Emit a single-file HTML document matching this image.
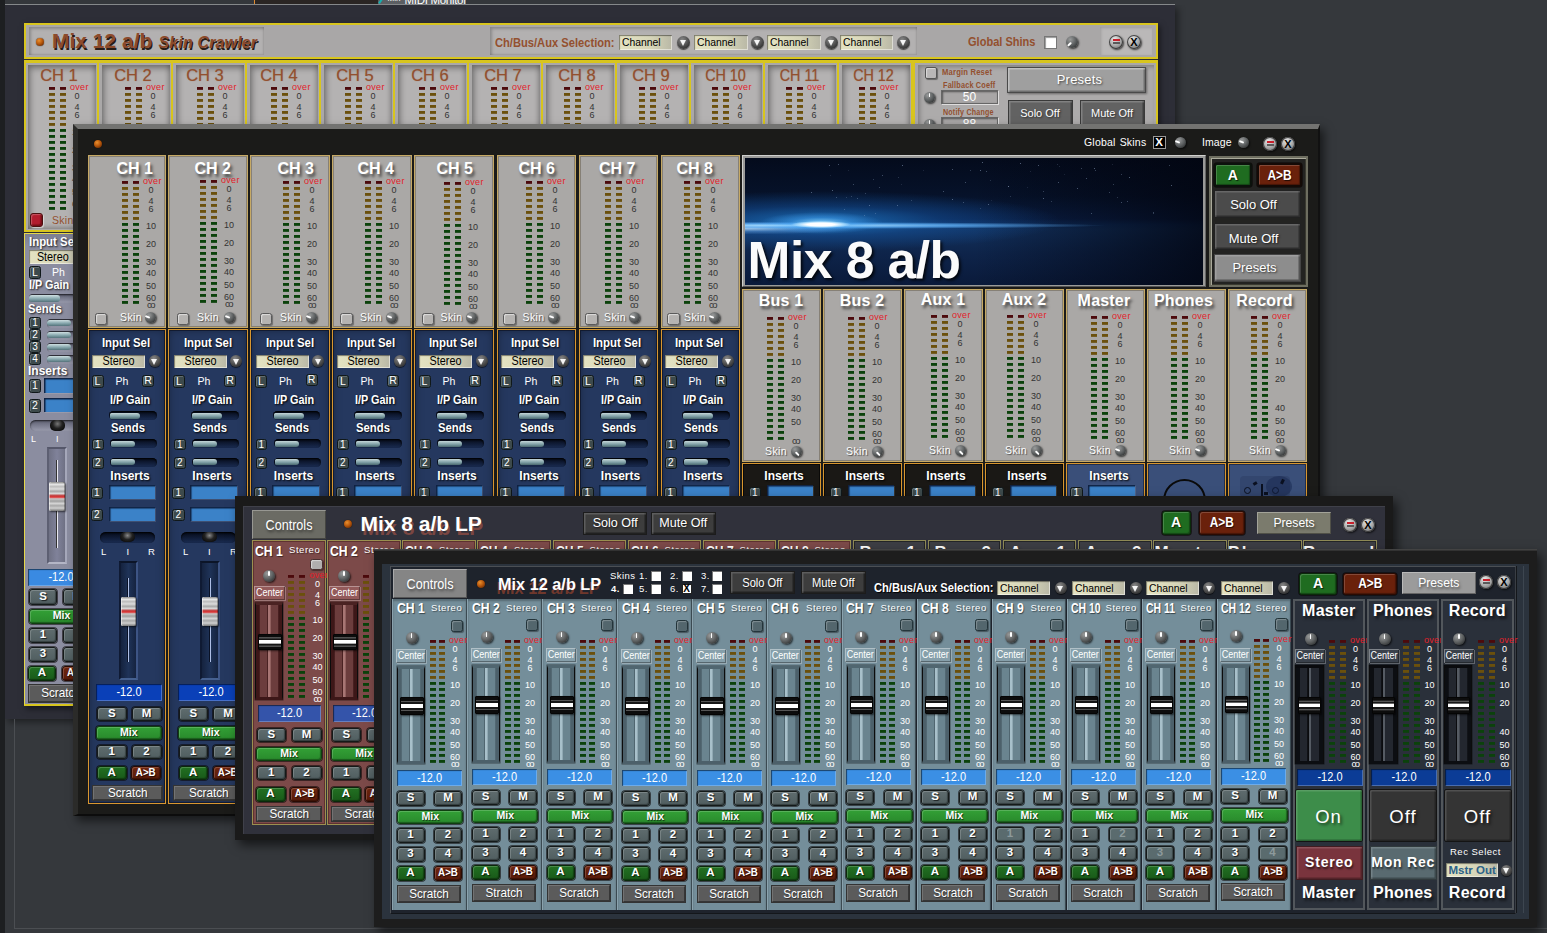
<!DOCTYPE html><html><head><meta charset="utf-8"><title>Mixer skins</title><style>
html,body{margin:0;padding:0;overflow:hidden}
body{width:1547px;height:933px;position:relative;overflow:hidden;background:#35383c;
 font-family:"Liberation Sans",sans-serif;font-size:12px;color:#fff}
div,span,i{position:absolute;display:block;box-sizing:border-box;white-space:nowrap}
b,i{font-style:inherit}
.sx{left:0;right:0;top:0;text-align:center;transform-origin:50% 50%}
.sxl{left:0;top:0;transform-origin:0 50%}
.dd .sxl{left:3px}
.dd.c .sx{left:0}
.win{overflow:hidden}
.c{text-align:center}
.bd{font-weight:bold}
.sh{text-shadow:1px 1px 2px rgba(0,0,0,.85)}
.mc{width:6px;height:124px;background:linear-gradient(to bottom,rgb(76,10,12) 0px,rgb(76,10,12) 2px,rgba(76,10,12,.85) 2px,rgba(76,10,12,.85) 3px,transparent 3px,transparent 6px,rgb(107,80,12) 6px,rgb(107,80,12) 8px,rgba(107,80,12,.85) 8px,rgba(107,80,12,.85) 9px,transparent 9px,transparent 12px,rgb(107,80,12) 12px,rgb(107,80,12) 14px,rgba(107,80,12,.85) 14px,rgba(107,80,12,.85) 15px,transparent 15px,transparent 18px,rgb(107,80,12) 18px,rgb(107,80,12) 20px,rgba(107,80,12,.85) 20px,rgba(107,80,12,.85) 21px,transparent 21px,transparent 24px,rgb(107,80,12) 24px,rgb(107,80,12) 26px,rgba(107,80,12,.85) 26px,rgba(107,80,12,.85) 27px,transparent 27px,transparent 30px,rgb(107,80,12) 30px,rgb(107,80,12) 32px,rgba(107,80,12,.85) 32px,rgba(107,80,12,.85) 33px,transparent 33px,transparent 36px,rgb(107,80,12) 36px,rgb(107,80,12) 38px,rgba(107,80,12,.85) 38px,rgba(107,80,12,.85) 39px,transparent 39px,transparent 42px,rgb(11,66,11) 42px,rgb(11,66,11) 44px,rgba(11,66,11,.85) 44px,rgba(11,66,11,.85) 45px,transparent 45px,transparent 48px,rgb(11,66,11) 48px,rgb(11,66,11) 50px,rgba(11,66,11,.85) 50px,rgba(11,66,11,.85) 51px,transparent 51px,transparent 54px,rgb(11,66,11) 54px,rgb(11,66,11) 56px,rgba(11,66,11,.85) 56px,rgba(11,66,11,.85) 57px,transparent 57px,transparent 60px,rgb(11,66,11) 60px,rgb(11,66,11) 62px,rgba(11,66,11,.85) 62px,rgba(11,66,11,.85) 63px,transparent 63px,transparent 66px,rgb(11,66,11) 66px,rgb(11,66,11) 68px,rgba(11,66,11,.85) 68px,rgba(11,66,11,.85) 69px,transparent 69px,transparent 72px,rgb(11,66,11) 72px,rgb(11,66,11) 74px,rgba(11,66,11,.85) 74px,rgba(11,66,11,.85) 75px,transparent 75px,transparent 78px,rgb(11,66,11) 78px,rgb(11,66,11) 80px,rgba(11,66,11,.85) 80px,rgba(11,66,11,.85) 81px,transparent 81px,transparent 84px,rgb(11,66,11) 84px,rgb(11,66,11) 86px,rgba(11,66,11,.85) 86px,rgba(11,66,11,.85) 87px,transparent 87px,transparent 90px,rgb(11,66,11) 90px,rgb(11,66,11) 92px,rgba(11,66,11,.85) 92px,rgba(11,66,11,.85) 93px,transparent 93px,transparent 96px,rgb(11,66,11) 96px,rgb(11,66,11) 98px,rgba(11,66,11,.85) 98px,rgba(11,66,11,.85) 99px,transparent 99px,transparent 102px,rgb(11,66,11) 102px,rgb(11,66,11) 104px,rgba(11,66,11,.85) 104px,rgba(11,66,11,.85) 105px,transparent 105px,transparent 108px,rgb(11,66,11) 108px,rgb(11,66,11) 110px,rgba(11,66,11,.85) 110px,rgba(11,66,11,.85) 111px,transparent 111px,transparent 114px,rgb(11,66,11) 114px,rgb(11,66,11) 116px,rgba(11,66,11,.85) 116px,rgba(11,66,11,.85) 117px,transparent 117px,transparent 120px,rgb(11,66,11) 120px,rgb(11,66,11) 122px,rgba(11,66,11,.85) 122px,rgba(11,66,11,.85) 123px,transparent 123px,transparent 126px)}
.ov{color:#e2202a;font-size:9px;letter-spacing:.3px}
.nm{font-size:9px;color:#333;width:14px;text-align:center;height:8px;line-height:8px}
.nw{color:#fff}
.inf{font-size:9.5px;letter-spacing:-1.6px;text-indent:-1px}
.led{border-radius:50%;background:radial-gradient(circle at 38% 32%,#e89030 0,#b8580c 45%,#4a1c02 100%);box-shadow:0 0 1px #000}
.kn{border-radius:50%;background:radial-gradient(circle at 35% 30%,#9a9c9c 0,#5c5f60 50%,#1c1e1e 100%);box-shadow:1px 1px 2px rgba(0,0,0,.7)}
.kn:after{content:"";position:absolute;left:50%;top:1px;width:1.5px;height:45%;margin-left:-.75px;background:#fff;border-radius:1px}
.kl:after{transform-origin:50% 100%;transform:rotate(-70deg)}
.kr:after{transform-origin:50% 100%;transform:rotate(135deg);}
.kq:after{transform-origin:50% 100%;transform:rotate(-135deg);}
.arr{border-radius:50%;background:radial-gradient(circle at 40% 30%,#8a8a8a 0,#4a4a4a 55%,#1a1a1a 100%);box-shadow:0 1px 1px rgba(0,0,0,.6)}
.arr:after{content:"";position:absolute;left:50%;top:50%;margin:-2.5px 0 0 -3.5px;border:3.5px solid transparent;border-top:6px solid #f4f4f4;border-bottom:0}
.dd{background:linear-gradient(to right,#e4e3c2 0,#d6d5b8 60%,#b9b8a6 100%);color:#000;font-size:11.5px;box-shadow:inset 1px 1px 1px rgba(0,0,0,.45),inset -1px -1px 0 rgba(255,255,255,.5)}
.rb{border-radius:50%;background:radial-gradient(circle at 40% 30%,#e8e8e8 0,#a8a8a8 50%,#555 100%);box-shadow:1px 1px 2px rgba(0,0,0,.7),inset 0 0 0 1px rgba(40,40,40,.8);color:#000;font-weight:bold;font-size:11px;text-align:center}
.rb i{left:3.5px;right:3.5px;height:2px;background:#c8202c}
/* generic small buttons */
.bt{background:linear-gradient(to bottom,#5f6c6e,#505e60);border:1.5px solid #141a19;border-radius:3px;box-shadow:inset 1px 1px 0 rgba(255,255,255,.18),inset -1px -1px 1px rgba(0,0,0,.35),0 0 0 .8px rgba(12,8,8,.75);font-weight:bold;text-align:center;font-size:11.5px;text-shadow:1px 1px 1px rgba(0,0,0,.7)}
.bt.dis{color:#8d9a9c;background:#5a6b6e;text-shadow:none}
.mix{background:linear-gradient(to bottom,#33a036,#298a2c);border-color:#0f3f10}
.ba{background:linear-gradient(to bottom,#227022,#195a19);border-color:#0a2a0a}
.bb{background:linear-gradient(to bottom,#70260f,#5a1c0a);border-color:#2a0a02}
.scr{background:#5b5b5b;border:1px solid #333;box-shadow:inset 1px 1px 0 rgba(255,255,255,.15),inset -1px -1px 0 rgba(0,0,0,.4);text-align:center;font-size:13px;text-shadow:1px 1px 1px rgba(0,0,0,.5)}
.val{text-align:center;font-size:12px;box-shadow:inset 1px 1px 1px rgba(0,0,0,.55),inset -1px -1px 0 rgba(255,255,255,.25)}
.nb{background:#3d4a4c;border:1.5px solid #10181a;border-radius:2.5px;font-size:10.5px;text-align:center;font-weight:normal;box-shadow:inset 1px 1px 0 rgba(255,255,255,.2)}
.sl{border-radius:5px;background:linear-gradient(to bottom,#050a18,#1a2c52);box-shadow:inset 0 1px 2px #000}
.sl i{left:1px;top:1.5px;bottom:1.5px;border-radius:2px 4px 4px 2px;background:linear-gradient(to bottom,#c4d6d8 0,#7fa0a6 55%,#4a686e 100%)}
.ins{background:#3b82c8;box-shadow:inset 1.5px 1.5px 1px rgba(0,0,20,.75),1px 1px 0 rgba(255,255,255,.12)}

.w1{background:#a9a7a7;border:2px solid #d8c51d}
.w1p{background:#b3b1b1;box-shadow:inset 2px 2px 3px rgba(0,0,0,.22),inset -1px -1px 2px rgba(0,0,0,.12)}
.w1ch{background:#aaa8a8;border:1.5px solid #d8c51d;border-top-width:3px;border-bottom-width:2px}
.w1w{background:#b4b2b2;box-shadow:inset 2px 3px 6px rgba(0,0,0,.38),inset -2px -2px 5px rgba(0,0,0,.2)}
.w1t{color:#8c4a2b;font-weight:bold;text-shadow:1px 1.5px .5px rgba(20,8,4,.9)}
.br{color:#93502f}
.w1lo{background:linear-gradient(to bottom,#7c7e91 0,#8b8da0 12px);border:1.5px solid #e6d84a;border-bottom:2px solid #d8c51d}
.cb{background:#b9b7b7;border:1.5px solid #555;border-radius:2px;box-shadow:inset 1px 1px 1px rgba(255,255,255,.5),1px 1px 1px rgba(0,0,0,.4)}
.tiny{font-size:8.5px;font-weight:bold;color:#93502f;letter-spacing:.2px}
.gbtn{background:#9f9f9f;border:1px solid #4a4a4a;box-shadow:inset 1.5px 1.5px 0 rgba(255,255,255,.35),inset -1.5px -1.5px 0 rgba(0,0,0,.3),1px 1px 2px rgba(0,0,0,.4);text-align:center;text-shadow:1px 1px 2px rgba(0,0,0,.6)}
.dbtn{background:#626262;border:1px solid #3a3a3a;box-shadow:inset 1.5px 1.5px 0 rgba(255,255,255,.2),inset -1.5px -1.5px 0 rgba(0,0,0,.35);text-align:center;text-shadow:1px 1px 2px rgba(0,0,0,.6)}
.w1v{background:#a8a6a6;border:1px solid #666;box-shadow:inset 1px 1px 2px rgba(0,0,0,.5),1px 1px 0 rgba(255,255,255,.6);text-align:center;font-size:12px;color:#fff}
.w1sl{border-radius:4px;background:linear-gradient(to bottom,#5c5e70,#9a9cae);box-shadow:inset 0 1px 2px rgba(0,0,0,.7)}
.w1sl i{left:0;top:1px;bottom:1.5px;border-radius:3px;background:linear-gradient(to bottom,#cfe0e2 0,#86a7ad 55%,#54727a 100%)}

.fcap{background:linear-gradient(to bottom,#888 0,#e6e6e6 8%,#bdbdbd 16%,#dcdcdc 24%,#a8a8a8 32%,#d8d8d8 40%,#c04040 47%,#e03030 52%,#c8c8c8 58%,#a0a0a0 66%,#d4d4d4 74%,#a8a8a8 82%,#cfcfcf 90%,#777 100%);border-radius:1.5px;box-shadow:1px 1px 2px rgba(0,0,0,.6),inset 1px 0 0 rgba(255,255,255,.5),inset -1px 0 0 rgba(0,0,0,.3)}

.w2{background:#1b1b19;border-top:5px solid #737371;border-left:5px solid #2b2b29;border-right:2px solid #111;border-bottom:2px solid #0c0c0c;box-shadow:4px 5px 9px rgba(0,0,0,.55)}
.w2ch{background:#aaa8a6;border:1.5px solid #c6a964;box-shadow:inset 0 0 0 1px rgba(90,80,60,.45)}
.w2lo{background:#25385f;border:1.5px solid #d8962f;box-shadow:inset 0 0 0 1px rgba(10,15,30,.6),inset 0 0 8px rgba(0,0,0,.35)}
.w2lb{background:#1a1815;border:1.5px solid #d8962f;box-shadow:inset 0 0 0 1px rgba(0,0,0,.6)}
.w2lm{background:#3a4f79;border:1.5px solid #d8962f;box-shadow:inset 0 0 0 1px rgba(10,15,30,.5)}
.lbl{font-weight:bold;font-size:16px;text-align:center;text-shadow:2px 3px 3px rgba(0,0,0,.6)}
.wl{font-weight:bold;font-size:12px;text-align:center;text-shadow:1px 1px 2px #000}
.cbw{background:#b5b3b1;border:1.5px solid #5a5a5a;border-radius:2.5px;box-shadow:inset 1px 1px 1px rgba(255,255,255,.55),1px 1px 1px rgba(0,0,0,.35)}
.skw{font-size:10.5px;letter-spacing:.4px;text-shadow:1px 1px 1px rgba(0,0,0,.55)}
.w2btn{background:#4b4b4b;border:1px solid #222;box-shadow:inset 1.5px 1.5px 0 rgba(255,255,255,.16),inset -1.5px -1.5px 0 rgba(0,0,0,.4);text-align:center;font-size:13px;text-shadow:1px 1px 2px rgba(0,0,0,.7)}
.gal{overflow:hidden;background:
 radial-gradient(ellipse 30px 3.5px at 76px 66.5px,#fff 0,#fff 45%,rgba(190,230,255,.8) 72%,rgba(80,170,245,0) 100%),
 radial-gradient(ellipse 62px 11px at 76px 65px,rgba(140,215,255,.9) 0,rgba(70,165,245,.45) 50%,rgba(40,120,220,0) 100%),
 radial-gradient(ellipse 300px 3.5px at 60px 67.5px,rgba(175,225,255,1) 0,rgba(95,175,245,.8) 50%,rgba(30,80,170,0) 100%),
 radial-gradient(ellipse 115px 6.5px at 0 70px,rgba(195,228,255,.85) 0,rgba(110,170,235,.4) 55%,rgba(30,80,170,0) 100%),
 radial-gradient(ellipse 240px 30px at 76px 63px,rgba(30,125,205,.8) 0,rgba(20,90,170,.42) 50%,rgba(10,40,100,0) 100%),
 linear-gradient(to right,rgba(2,5,16,0) 50%,rgba(2,5,16,.8) 100%),
 linear-gradient(to bottom,#040b1c 0,#06122a 30%,#0a1e44 48%,#0e2c5a 52.5%,#12305c 56%,#0e244a 75%,#0a1a3a 100%)}
.star{width:1px;height:1px;background:#9fb6d6}

.w3{background:#30313b;border:8.5px solid #1a1a1a;border-top-width:10px;border-bottom-width:6.5px;box-shadow:4px 5px 10px rgba(0,0,0,.6),inset 1px 1px 0 #3f4049}
.w3s{background:#7c4a49;border:1px solid #9a9050;box-shadow:inset 0 0 0 1px rgba(60,20,20,.45)}
.w3b{background:#3d3e44;border:1px solid #8f8a56;box-shadow:inset 0 0 0 1px rgba(0,0,0,.4)}
.tab{text-align:center;font-size:14px;text-shadow:1px 2px 3px rgba(0,0,0,.55);box-shadow:inset 1px 1px 0 rgba(255,255,255,.3),inset -1px -1px 0 rgba(0,0,0,.35)}
.cn{font-weight:bold;font-size:14.5px;transform-origin:0 50%;transform:scaleX(.84);text-shadow:1px 1px 1px rgba(0,0,0,.5)}
.st{font-size:9.5px;letter-spacing:.55px;text-shadow:1px 1px 1px rgba(0,0,0,.45)}
.sb{background:#b0aeae;border:1.5px solid #4a3030;border-radius:2.5px;box-shadow:inset 1px 1px 1px rgba(255,255,255,.5),1px 1px 1px rgba(0,0,0,.4)}
.ctr{font-size:10px;text-align:center;box-shadow:inset 1px 1px 0 rgba(255,255,255,.35),inset -1px -1px 0 rgba(0,0,0,.35),1px 1px 0 rgba(255,255,255,.25)}
.fcb{background:linear-gradient(to bottom,#0c0c0c 0,#0c0c0c 16%,#555 18%,#555 24%,#161616 26%,#161616 36%,#fff 38%,#fff 60%,#161616 62%,#161616 74%,#555 76%,#555 82%,#0c0c0c 84%,#0c0c0c 100%);border:1px solid #050505;border-radius:1px;box-shadow:1px 1px 2px rgba(0,0,0,.6)}
.hbtn{background:#3d3d3d;border:1px solid #1c1c1c;box-shadow:inset 1.5px 1.5px 0 rgba(255,255,255,.17),inset -1.5px -1.5px 0 rgba(0,0,0,.45);text-align:center;font-size:13.5px;text-shadow:1px 1px 2px rgba(0,0,0,.7)}

.w4{background:#2b333d;border:8px solid #1d1d1d;border-top-width:15.5px;box-shadow:4px 5px 10px rgba(0,0,0,.6)}
.w4i{background:#1e232c;border:1.5px solid #4b4f54;border-right-color:#3a3e44;border-bottom-color:#14171b}
.w4s{background:#748e9a;border-right:1.5px solid #3b4a52;border-left:1px solid #8aa2ad;box-shadow:inset 0 2px 2px rgba(0,0,0,.25)}
.w4m{background:#2a303a;border:2px solid #52575c}
.sb4{background:#53666d;border:1.5px solid #23343a;border-radius:2.5px;box-shadow:inset 1px 1px 1px rgba(255,255,255,.25),1px 1px 1px rgba(0,0,0,.4)}
.sk4{font-size:9.5px;letter-spacing:.45px}
.ck{background:#fff;box-shadow:inset 1px 1px 0 #777}
.big{border:1.5px solid #141414;border-radius:2px;text-align:center;font-size:18.5px;letter-spacing:1px;text-shadow:2px 2px 3px rgba(0,0,0,.6);box-shadow:inset 1.5px 1.5px 0 rgba(255,255,255,.14),inset -1.5px -1.5px 0 rgba(0,0,0,.3)}
.mid{border:1.5px solid rgba(0,0,0,.45);text-align:center;font-weight:bold;font-size:14px;letter-spacing:.8px;text-shadow:1px 2px 2px rgba(0,0,0,.6);box-shadow:inset 1.5px 1.5px 0 rgba(255,255,255,.16),inset -1.5px -1.5px 0 rgba(0,0,0,.3)}
</style></head><body><div class="" style="left:5px;top:5px;width:1170px;height:713.5px;line-height:713.5px;background:#2d2e37;box-shadow:3px 3px 7px rgba(0,0,0,.45)"></div><div class="" style="left:0px;top:0px;width:1547px;height:4.5px;line-height:4.5px;background:#34373b;border-bottom:1px solid #85888a"></div><div class="" style="left:254px;top:0px;width:124px;height:4px;line-height:4px;background:#2a2523;border-left:1.5px solid #e08a30"></div><div class="" style="left:378px;top:0px;width:88px;height:4px;line-height:4px;background:#5c5f63;overflow:hidden"><span style="left:9.5px;top:-6px;font-size:8px;line-height:10px">Min</span><i style="left:2px;top:-3px;width:2px;height:7px;background:#16b0b0;transform:rotate(35deg)"></i><span style="left:26.5px;top:-6px;font-size:11.5px;line-height:12px;letter-spacing:-.3px">MIDI Monitor</span></div><div class="" style="left:1175px;top:0px;width:372px;height:5px;line-height:5px;background:#35383c"></div><div class="" style="left:0px;top:0px;width:5px;height:933px;line-height:933px;background:#1d1f21"></div><div class="" style="left:14px;top:718.5px;width:1px;height:210px;line-height:210px;background:#4b4e52"></div><div class="" style="left:14px;top:928px;width:1533px;height:1px;line-height:1px;background:#4b4e52"></div><div class="" style="left:24px;top:23px;width:1133.5px;height:683px;line-height:683px;background:#2d2e37;box-shadow:2px 3px 6px rgba(0,0,0,.5)"></div><div class="w1" style="left:24px;top:23px;width:1133.5px;height:36px;line-height:36px;"></div><div class="w1p" style="left:29px;top:27px;width:235px;height:28px;line-height:28px;"></div><div class="led" style="left:36px;top:38px;width:8px;height:8px;line-height:8px;"></div><div class="w1t" style="left:52px;top:27px;height:28px;line-height:28px;font-size:21px">Mix 12 a/b</div><div class="w1t" style="left:158.5px;top:29px;height:28px;line-height:28px;font-size:16px;font-style:italic;letter-spacing:.15px">Skin Crawler</div><div class="w1p" style="left:489.5px;top:27px;width:427px;height:28px;line-height:28px;"></div><div class="bd br" style="left:495px;top:35.5px;height:15px;line-height:15px;font-size:12.5px"><span class="sxl" style="transform:scaleX(0.892)">Ch/Bus/Aux Selection:</span></div><div class="dd" style="left:618.5px;top:34.5px;width:53.5px;height:15px;line-height:15px;"><span class="sxl" style="transform:scaleX(0.9)">Channel</span></div><div class="arr" style="left:676.5px;top:35.5px;width:13px;height:13px;line-height:13px;"></div><div class="dd" style="left:694px;top:34.5px;width:53.5px;height:15px;line-height:15px;"><span class="sxl" style="transform:scaleX(0.9)">Channel</span></div><div class="arr" style="left:751px;top:35.5px;width:13px;height:13px;line-height:13px;"></div><div class="dd" style="left:767px;top:34.5px;width:53.5px;height:15px;line-height:15px;"><span class="sxl" style="transform:scaleX(0.9)">Channel</span></div><div class="arr" style="left:824.5px;top:35.5px;width:13px;height:13px;line-height:13px;"></div><div class="dd" style="left:839.5px;top:34.5px;width:53.5px;height:15px;line-height:15px;"><span class="sxl" style="transform:scaleX(0.9)">Channel</span></div><div class="arr" style="left:897px;top:35.5px;width:13px;height:13px;line-height:13px;"></div><div class="bd br" style="left:968px;top:34.5px;height:15px;line-height:15px;font-size:12.5px"><span class="sxl" style="transform:scaleX(0.883)">Global Shins</span></div><div class="" style="left:1044px;top:35.5px;width:13px;height:13px;line-height:13px;background:#fff;border:1px solid #777;box-shadow:inset 1px 1px 1px rgba(0,0,0,.4)"></div><div class="kn kq" style="left:1066px;top:35.5px;width:12px;height:12px;line-height:12px;"></div><div class="w1p" style="left:1099.5px;top:27px;width:52px;height:28px;line-height:28px;background:#bab8b8;box-shadow:inset 1px 1px 3px rgba(0,0,0,.15)"></div><div class="rb" style="left:1109px;top:34.5px;width:14px;height:14px;line-height:14px;"><i style="top:4px"></i><i style="top:7px;background:#5a5a5a"></i></div><div class="rb" style="left:1127px;top:34.5px;width:14px;height:14px;line-height:14px;">X</div><div class="w1ch" style="left:24px;top:60px;width:74px;height:172px;line-height:172px;border-left-width:2px"></div><div class="w1w" style="left:28px;top:65px;width:67.5px;height:164px;line-height:164px;"></div><div class="c br" style="left:27.5px;top:66px;width:63px;height:18px;line-height:18px;font-size:16.5px;text-shadow:0 0 1px rgba(147,80,47,.6)">CH 1</div><div class="mc" style="left:49px;top:87px;"></div><div class="mc" style="left:60px;top:87px;"></div><div class="ov" style="left:70px;top:82px;height:10px;line-height:10px;">over</div><div class="nm" style="left:70px;top:92px;">0</div><div class="nm" style="left:70px;top:102.5px;">4</div><div class="nm" style="left:70px;top:110.5px;">6</div><div class="nm" style="left:70px;top:128px;">10</div><div class="nm" style="left:70px;top:145.5px;">20</div><div class="nm" style="left:70px;top:163.5px;">30</div><div class="nm" style="left:70px;top:175px;">40</div><div class="nm" style="left:70px;top:187.5px;">50</div><div class="nm" style="left:70px;top:199.5px;">60</div><div class="nm inf" style="left:70px;top:206.5px;">co</div><div class="" style="left:30px;top:213px;width:13px;height:14px;line-height:14px;background:#b21c2e;border:1.5px solid #4a1010;border-radius:3px;box-shadow:inset 1px 1px 1px rgba(255,255,255,.25),inset -1.5px -1.5px 1px rgba(60,0,0,.5),1px 1px 1px rgba(255,255,255,.5)"></div><div class="br" style="left:52px;top:213px;height:14px;line-height:14px;font-size:10.5px;letter-spacing:.3px">Skin</div><div class="w1ch" style="left:98px;top:60px;width:74px;height:172px;line-height:172px;"></div><div class="w1w" style="left:102px;top:65px;width:67.5px;height:164px;line-height:164px;"></div><div class="c br" style="left:101.5px;top:66px;width:63px;height:18px;line-height:18px;font-size:16.5px;text-shadow:0 0 1px rgba(147,80,47,.6)">CH 2</div><div class="mc" style="left:125px;top:87px;"></div><div class="mc" style="left:136px;top:87px;"></div><div class="ov" style="left:146px;top:82px;height:10px;line-height:10px;">over</div><div class="nm" style="left:146px;top:92px;">0</div><div class="nm" style="left:146px;top:102.5px;">4</div><div class="nm" style="left:146px;top:110.5px;">6</div><div class="nm" style="left:146px;top:128px;">10</div><div class="nm" style="left:146px;top:145.5px;">20</div><div class="nm" style="left:146px;top:163.5px;">30</div><div class="nm" style="left:146px;top:175px;">40</div><div class="nm" style="left:146px;top:187.5px;">50</div><div class="nm" style="left:146px;top:199.5px;">60</div><div class="nm inf" style="left:146px;top:206.5px;">co</div><div class="" style="left:104px;top:213px;width:13px;height:14px;line-height:14px;background:#b9b7b7;border:1.5px solid #4a1010;border-radius:3px;box-shadow:inset 1px 1px 1px rgba(255,255,255,.25),inset -1.5px -1.5px 1px rgba(60,0,0,.5),1px 1px 1px rgba(255,255,255,.5)"></div><div class="br" style="left:126px;top:213px;height:14px;line-height:14px;font-size:10.5px;letter-spacing:.3px">Skin</div><div class="w1ch" style="left:172px;top:60px;width:74px;height:172px;line-height:172px;"></div><div class="w1w" style="left:176px;top:65px;width:67.5px;height:164px;line-height:164px;"></div><div class="c br" style="left:173.5px;top:66px;width:63px;height:18px;line-height:18px;font-size:16.5px;text-shadow:0 0 1px rgba(147,80,47,.6)">CH 3</div><div class="mc" style="left:197px;top:87px;"></div><div class="mc" style="left:208px;top:87px;"></div><div class="ov" style="left:218px;top:82px;height:10px;line-height:10px;">over</div><div class="nm" style="left:218px;top:92px;">0</div><div class="nm" style="left:218px;top:102.5px;">4</div><div class="nm" style="left:218px;top:110.5px;">6</div><div class="nm" style="left:218px;top:128px;">10</div><div class="nm" style="left:218px;top:145.5px;">20</div><div class="nm" style="left:218px;top:163.5px;">30</div><div class="nm" style="left:218px;top:175px;">40</div><div class="nm" style="left:218px;top:187.5px;">50</div><div class="nm" style="left:218px;top:199.5px;">60</div><div class="nm inf" style="left:218px;top:206.5px;">co</div><div class="" style="left:178px;top:213px;width:13px;height:14px;line-height:14px;background:#b9b7b7;border:1.5px solid #4a1010;border-radius:3px;box-shadow:inset 1px 1px 1px rgba(255,255,255,.25),inset -1.5px -1.5px 1px rgba(60,0,0,.5),1px 1px 1px rgba(255,255,255,.5)"></div><div class="br" style="left:200px;top:213px;height:14px;line-height:14px;font-size:10.5px;letter-spacing:.3px">Skin</div><div class="w1ch" style="left:246px;top:60px;width:74px;height:172px;line-height:172px;"></div><div class="w1w" style="left:250px;top:65px;width:67.5px;height:164px;line-height:164px;"></div><div class="c br" style="left:247.5px;top:66px;width:63px;height:18px;line-height:18px;font-size:16.5px;text-shadow:0 0 1px rgba(147,80,47,.6)">CH 4</div><div class="mc" style="left:271px;top:87px;"></div><div class="mc" style="left:282px;top:87px;"></div><div class="ov" style="left:292px;top:82px;height:10px;line-height:10px;">over</div><div class="nm" style="left:292px;top:92px;">0</div><div class="nm" style="left:292px;top:102.5px;">4</div><div class="nm" style="left:292px;top:110.5px;">6</div><div class="nm" style="left:292px;top:128px;">10</div><div class="nm" style="left:292px;top:145.5px;">20</div><div class="nm" style="left:292px;top:163.5px;">30</div><div class="nm" style="left:292px;top:175px;">40</div><div class="nm" style="left:292px;top:187.5px;">50</div><div class="nm" style="left:292px;top:199.5px;">60</div><div class="nm inf" style="left:292px;top:206.5px;">co</div><div class="" style="left:252px;top:213px;width:13px;height:14px;line-height:14px;background:#b9b7b7;border:1.5px solid #4a1010;border-radius:3px;box-shadow:inset 1px 1px 1px rgba(255,255,255,.25),inset -1.5px -1.5px 1px rgba(60,0,0,.5),1px 1px 1px rgba(255,255,255,.5)"></div><div class="br" style="left:274px;top:213px;height:14px;line-height:14px;font-size:10.5px;letter-spacing:.3px">Skin</div><div class="w1ch" style="left:320px;top:60px;width:74px;height:172px;line-height:172px;"></div><div class="w1w" style="left:324px;top:65px;width:67.5px;height:164px;line-height:164px;"></div><div class="c br" style="left:323.5px;top:66px;width:63px;height:18px;line-height:18px;font-size:16.5px;text-shadow:0 0 1px rgba(147,80,47,.6)">CH 5</div><div class="mc" style="left:345px;top:87px;"></div><div class="mc" style="left:356px;top:87px;"></div><div class="ov" style="left:366px;top:82px;height:10px;line-height:10px;">over</div><div class="nm" style="left:366px;top:92px;">0</div><div class="nm" style="left:366px;top:102.5px;">4</div><div class="nm" style="left:366px;top:110.5px;">6</div><div class="nm" style="left:366px;top:128px;">10</div><div class="nm" style="left:366px;top:145.5px;">20</div><div class="nm" style="left:366px;top:163.5px;">30</div><div class="nm" style="left:366px;top:175px;">40</div><div class="nm" style="left:366px;top:187.5px;">50</div><div class="nm" style="left:366px;top:199.5px;">60</div><div class="nm inf" style="left:366px;top:206.5px;">co</div><div class="" style="left:326px;top:213px;width:13px;height:14px;line-height:14px;background:#b9b7b7;border:1.5px solid #4a1010;border-radius:3px;box-shadow:inset 1px 1px 1px rgba(255,255,255,.25),inset -1.5px -1.5px 1px rgba(60,0,0,.5),1px 1px 1px rgba(255,255,255,.5)"></div><div class="br" style="left:348px;top:213px;height:14px;line-height:14px;font-size:10.5px;letter-spacing:.3px">Skin</div><div class="w1ch" style="left:394px;top:60px;width:74px;height:172px;line-height:172px;"></div><div class="w1w" style="left:398px;top:65px;width:67.5px;height:164px;line-height:164px;"></div><div class="c br" style="left:398.5px;top:66px;width:63px;height:18px;line-height:18px;font-size:16.5px;text-shadow:0 0 1px rgba(147,80,47,.6)">CH 6</div><div class="mc" style="left:419px;top:87px;"></div><div class="mc" style="left:430px;top:87px;"></div><div class="ov" style="left:440px;top:82px;height:10px;line-height:10px;">over</div><div class="nm" style="left:440px;top:92px;">0</div><div class="nm" style="left:440px;top:102.5px;">4</div><div class="nm" style="left:440px;top:110.5px;">6</div><div class="nm" style="left:440px;top:128px;">10</div><div class="nm" style="left:440px;top:145.5px;">20</div><div class="nm" style="left:440px;top:163.5px;">30</div><div class="nm" style="left:440px;top:175px;">40</div><div class="nm" style="left:440px;top:187.5px;">50</div><div class="nm" style="left:440px;top:199.5px;">60</div><div class="nm inf" style="left:440px;top:206.5px;">co</div><div class="" style="left:400px;top:213px;width:13px;height:14px;line-height:14px;background:#b9b7b7;border:1.5px solid #4a1010;border-radius:3px;box-shadow:inset 1px 1px 1px rgba(255,255,255,.25),inset -1.5px -1.5px 1px rgba(60,0,0,.5),1px 1px 1px rgba(255,255,255,.5)"></div><div class="br" style="left:422px;top:213px;height:14px;line-height:14px;font-size:10.5px;letter-spacing:.3px">Skin</div><div class="w1ch" style="left:468px;top:60px;width:74px;height:172px;line-height:172px;"></div><div class="w1w" style="left:472px;top:65px;width:67.5px;height:164px;line-height:164px;"></div><div class="c br" style="left:471.5px;top:66px;width:63px;height:18px;line-height:18px;font-size:16.5px;text-shadow:0 0 1px rgba(147,80,47,.6)">CH 7</div><div class="mc" style="left:491px;top:87px;"></div><div class="mc" style="left:502px;top:87px;"></div><div class="ov" style="left:512px;top:82px;height:10px;line-height:10px;">over</div><div class="nm" style="left:512px;top:92px;">0</div><div class="nm" style="left:512px;top:102.5px;">4</div><div class="nm" style="left:512px;top:110.5px;">6</div><div class="nm" style="left:512px;top:128px;">10</div><div class="nm" style="left:512px;top:145.5px;">20</div><div class="nm" style="left:512px;top:163.5px;">30</div><div class="nm" style="left:512px;top:175px;">40</div><div class="nm" style="left:512px;top:187.5px;">50</div><div class="nm" style="left:512px;top:199.5px;">60</div><div class="nm inf" style="left:512px;top:206.5px;">co</div><div class="" style="left:474px;top:213px;width:13px;height:14px;line-height:14px;background:#b9b7b7;border:1.5px solid #4a1010;border-radius:3px;box-shadow:inset 1px 1px 1px rgba(255,255,255,.25),inset -1.5px -1.5px 1px rgba(60,0,0,.5),1px 1px 1px rgba(255,255,255,.5)"></div><div class="br" style="left:496px;top:213px;height:14px;line-height:14px;font-size:10.5px;letter-spacing:.3px">Skin</div><div class="w1ch" style="left:542px;top:60px;width:74px;height:172px;line-height:172px;"></div><div class="w1w" style="left:546px;top:65px;width:67.5px;height:164px;line-height:164px;"></div><div class="c br" style="left:545.5px;top:66px;width:63px;height:18px;line-height:18px;font-size:16.5px;text-shadow:0 0 1px rgba(147,80,47,.6)">CH 8</div><div class="mc" style="left:564px;top:87px;"></div><div class="mc" style="left:575px;top:87px;"></div><div class="ov" style="left:585px;top:82px;height:10px;line-height:10px;">over</div><div class="nm" style="left:585px;top:92px;">0</div><div class="nm" style="left:585px;top:102.5px;">4</div><div class="nm" style="left:585px;top:110.5px;">6</div><div class="nm" style="left:585px;top:128px;">10</div><div class="nm" style="left:585px;top:145.5px;">20</div><div class="nm" style="left:585px;top:163.5px;">30</div><div class="nm" style="left:585px;top:175px;">40</div><div class="nm" style="left:585px;top:187.5px;">50</div><div class="nm" style="left:585px;top:199.5px;">60</div><div class="nm inf" style="left:585px;top:206.5px;">co</div><div class="" style="left:548px;top:213px;width:13px;height:14px;line-height:14px;background:#b9b7b7;border:1.5px solid #4a1010;border-radius:3px;box-shadow:inset 1px 1px 1px rgba(255,255,255,.25),inset -1.5px -1.5px 1px rgba(60,0,0,.5),1px 1px 1px rgba(255,255,255,.5)"></div><div class="br" style="left:570px;top:213px;height:14px;line-height:14px;font-size:10.5px;letter-spacing:.3px">Skin</div><div class="w1ch" style="left:616px;top:60px;width:74px;height:172px;line-height:172px;"></div><div class="w1w" style="left:620px;top:65px;width:67.5px;height:164px;line-height:164px;"></div><div class="c br" style="left:619.5px;top:66px;width:63px;height:18px;line-height:18px;font-size:16.5px;text-shadow:0 0 1px rgba(147,80,47,.6)">CH 9</div><div class="mc" style="left:639px;top:87px;"></div><div class="mc" style="left:650px;top:87px;"></div><div class="ov" style="left:660px;top:82px;height:10px;line-height:10px;">over</div><div class="nm" style="left:660px;top:92px;">0</div><div class="nm" style="left:660px;top:102.5px;">4</div><div class="nm" style="left:660px;top:110.5px;">6</div><div class="nm" style="left:660px;top:128px;">10</div><div class="nm" style="left:660px;top:145.5px;">20</div><div class="nm" style="left:660px;top:163.5px;">30</div><div class="nm" style="left:660px;top:175px;">40</div><div class="nm" style="left:660px;top:187.5px;">50</div><div class="nm" style="left:660px;top:199.5px;">60</div><div class="nm inf" style="left:660px;top:206.5px;">co</div><div class="" style="left:622px;top:213px;width:13px;height:14px;line-height:14px;background:#b9b7b7;border:1.5px solid #4a1010;border-radius:3px;box-shadow:inset 1px 1px 1px rgba(255,255,255,.25),inset -1.5px -1.5px 1px rgba(60,0,0,.5),1px 1px 1px rgba(255,255,255,.5)"></div><div class="br" style="left:644px;top:213px;height:14px;line-height:14px;font-size:10.5px;letter-spacing:.3px">Skin</div><div class="w1ch" style="left:690px;top:60px;width:74px;height:172px;line-height:172px;"></div><div class="w1w" style="left:694px;top:65px;width:67.5px;height:164px;line-height:164px;"></div><div class="c br" style="left:693.5px;top:66px;width:63px;height:18px;line-height:18px;font-size:16.5px;text-shadow:0 0 1px rgba(147,80,47,.6)"><span class="sx" style="transform:scaleX(0.87)">CH 10</span></div><div class="mc" style="left:712px;top:87px;"></div><div class="mc" style="left:723px;top:87px;"></div><div class="ov" style="left:733px;top:82px;height:10px;line-height:10px;">over</div><div class="nm" style="left:733px;top:92px;">0</div><div class="nm" style="left:733px;top:102.5px;">4</div><div class="nm" style="left:733px;top:110.5px;">6</div><div class="nm" style="left:733px;top:128px;">10</div><div class="nm" style="left:733px;top:145.5px;">20</div><div class="nm" style="left:733px;top:163.5px;">30</div><div class="nm" style="left:733px;top:175px;">40</div><div class="nm" style="left:733px;top:187.5px;">50</div><div class="nm" style="left:733px;top:199.5px;">60</div><div class="nm inf" style="left:733px;top:206.5px;">co</div><div class="" style="left:696px;top:213px;width:13px;height:14px;line-height:14px;background:#b9b7b7;border:1.5px solid #4a1010;border-radius:3px;box-shadow:inset 1px 1px 1px rgba(255,255,255,.25),inset -1.5px -1.5px 1px rgba(60,0,0,.5),1px 1px 1px rgba(255,255,255,.5)"></div><div class="br" style="left:718px;top:213px;height:14px;line-height:14px;font-size:10.5px;letter-spacing:.3px">Skin</div><div class="w1ch" style="left:764px;top:60px;width:74px;height:172px;line-height:172px;"></div><div class="w1w" style="left:768px;top:65px;width:67.5px;height:164px;line-height:164px;"></div><div class="c br" style="left:767.5px;top:66px;width:63px;height:18px;line-height:18px;font-size:16.5px;text-shadow:0 0 1px rgba(147,80,47,.6)"><span class="sx" style="transform:scaleX(0.87)">CH 11</span></div><div class="mc" style="left:786px;top:87px;"></div><div class="mc" style="left:797px;top:87px;"></div><div class="ov" style="left:807px;top:82px;height:10px;line-height:10px;">over</div><div class="nm" style="left:807px;top:92px;">0</div><div class="nm" style="left:807px;top:102.5px;">4</div><div class="nm" style="left:807px;top:110.5px;">6</div><div class="nm" style="left:807px;top:128px;">10</div><div class="nm" style="left:807px;top:145.5px;">20</div><div class="nm" style="left:807px;top:163.5px;">30</div><div class="nm" style="left:807px;top:175px;">40</div><div class="nm" style="left:807px;top:187.5px;">50</div><div class="nm" style="left:807px;top:199.5px;">60</div><div class="nm inf" style="left:807px;top:206.5px;">co</div><div class="" style="left:770px;top:213px;width:13px;height:14px;line-height:14px;background:#b9b7b7;border:1.5px solid #4a1010;border-radius:3px;box-shadow:inset 1px 1px 1px rgba(255,255,255,.25),inset -1.5px -1.5px 1px rgba(60,0,0,.5),1px 1px 1px rgba(255,255,255,.5)"></div><div class="br" style="left:792px;top:213px;height:14px;line-height:14px;font-size:10.5px;letter-spacing:.3px">Skin</div><div class="w1ch" style="left:838px;top:60px;width:74px;height:172px;line-height:172px;"></div><div class="w1w" style="left:842px;top:65px;width:67.5px;height:164px;line-height:164px;"></div><div class="c br" style="left:841.5px;top:66px;width:63px;height:18px;line-height:18px;font-size:16.5px;text-shadow:0 0 1px rgba(147,80,47,.6)"><span class="sx" style="transform:scaleX(0.87)">CH 12</span></div><div class="mc" style="left:859px;top:87px;"></div><div class="mc" style="left:870px;top:87px;"></div><div class="ov" style="left:880px;top:82px;height:10px;line-height:10px;">over</div><div class="nm" style="left:880px;top:92px;">0</div><div class="nm" style="left:880px;top:102.5px;">4</div><div class="nm" style="left:880px;top:110.5px;">6</div><div class="nm" style="left:880px;top:128px;">10</div><div class="nm" style="left:880px;top:145.5px;">20</div><div class="nm" style="left:880px;top:163.5px;">30</div><div class="nm" style="left:880px;top:175px;">40</div><div class="nm" style="left:880px;top:187.5px;">50</div><div class="nm" style="left:880px;top:199.5px;">60</div><div class="nm inf" style="left:880px;top:206.5px;">co</div><div class="" style="left:844px;top:213px;width:13px;height:14px;line-height:14px;background:#b9b7b7;border:1.5px solid #4a1010;border-radius:3px;box-shadow:inset 1px 1px 1px rgba(255,255,255,.25),inset -1.5px -1.5px 1px rgba(60,0,0,.5),1px 1px 1px rgba(255,255,255,.5)"></div><div class="br" style="left:866px;top:213px;height:14px;line-height:14px;font-size:10.5px;letter-spacing:.3px">Skin</div><div class="w1ch" style="left:912px;top:60px;width:245.5px;height:172px;line-height:172px;border-right-width:2px;border-left-width:3px"></div><div class="w1w" style="left:917.5px;top:64.5px;width:236px;height:164px;line-height:164px;background:#adabab;box-shadow:inset 2px 2px 4px rgba(0,0,0,.25)"></div><div class="cb" style="left:925px;top:66.5px;width:12px;height:12.5px;line-height:9.5px;"></div><div class="tiny" style="left:942px;top:67px;height:10px;line-height:10px;"><span class="sxl" style="transform:scaleX(0.9)">Margin Reset</span></div><div class="tiny" style="left:943px;top:80px;height:10px;line-height:10px;"><span class="sxl" style="transform:scaleX(0.86)">Fallback Coeff</span></div><div class="kn " style="left:924px;top:91.5px;width:11px;height:11px;line-height:11px;"></div><div class="w1v" style="left:941px;top:90px;width:57px;height:13.5px;line-height:13.5px;">50</div><div class="tiny" style="left:943px;top:106.5px;height:10px;line-height:10px;"><span class="sxl" style="transform:scaleX(0.84)">Notify Change</span></div><div class="kn " style="left:924px;top:118.5px;width:11px;height:11px;line-height:11px;"></div><div class="w1v" style="left:941px;top:117px;width:57px;height:13.5px;line-height:13.5px;">88</div><div class="gbtn" style="left:1007px;top:66.5px;width:139px;height:26px;line-height:23px;font-size:13px;letter-spacing:.2px;text-indent:6px">Presets</div><div class="dbtn" style="left:1007.5px;top:100px;width:65px;height:27.5px;line-height:24.5px;font-size:11px">Solo Off</div><div class="dbtn" style="left:1079.5px;top:100px;width:65px;height:27.5px;line-height:24.5px;font-size:11px">Mute Off</div><div class="w1lo" style="left:24px;top:233px;width:74px;height:473px;line-height:473px;"></div><div class="bd sh" style="left:29px;top:235px;height:14px;line-height:14px;font-size:12px"><span class="sxl" style="transform:scaleX(0.95)">Input Sel</span></div><div class="dd c" style="left:29px;top:250px;width:53px;height:14px;line-height:14px;padding:0;font-size:12px;text-indent:-6px"><span class="sx" style="transform:scaleX(0.9)">Stereo</span></div><div class="nb" style="left:29px;top:266px;width:12px;height:13px;line-height:10px;">L</div><div class="" style="left:52px;top:266px;height:13px;line-height:13px;font-size:10.5px">Ph</div><div class="bd sh" style="left:29px;top:278px;height:14px;line-height:14px;font-size:12px"><span class="sxl" style="transform:scaleX(0.9)">I/P Gain</span></div><div class="w1sl" style="left:29px;top:294px;width:47px;height:9px;line-height:9px;"><i style="width:31px"></i></div><div class="bd sh" style="left:28px;top:302px;height:14px;line-height:14px;font-size:12px"><span class="sxl" style="transform:scaleX(0.94)">Sends</span></div><div class="nb" style="left:29px;top:317px;width:12px;height:12px;line-height:9px;font-size:10px">1</div><div class="w1sl" style="left:47px;top:318.5px;width:47px;height:9px;line-height:9px;"><i style="width:24px"></i></div><div class="nb" style="left:29px;top:329px;width:12px;height:12px;line-height:9px;font-size:10px">2</div><div class="w1sl" style="left:47px;top:330.5px;width:47px;height:9px;line-height:9px;"><i style="width:24px"></i></div><div class="nb" style="left:29px;top:341px;width:12px;height:12px;line-height:9px;font-size:10px">3</div><div class="w1sl" style="left:47px;top:342.5px;width:47px;height:9px;line-height:9px;"><i style="width:24px"></i></div><div class="nb" style="left:29px;top:353px;width:12px;height:12px;line-height:9px;font-size:10px">4</div><div class="w1sl" style="left:47px;top:354.5px;width:47px;height:9px;line-height:9px;"><i style="width:24px"></i></div><div class="bd sh" style="left:28px;top:364px;height:14px;line-height:14px;font-size:12px">Inserts</div><div class="nb" style="left:29px;top:379px;width:12px;height:14px;line-height:11px;">1</div><div class="ins" style="left:44px;top:378px;width:50px;height:14.5px;line-height:14.5px;"></div><div class="nb" style="left:29px;top:399px;width:12px;height:14px;line-height:11px;">2</div><div class="ins" style="left:44px;top:397.5px;width:50px;height:14.5px;line-height:14.5px;"></div><div class="w1sl" style="left:30px;top:420px;width:56px;height:11px;line-height:11px;border-radius:6px"></div><div class="" style="left:50px;top:420px;width:15px;height:10.5px;line-height:10.5px;border-radius:5px;background:radial-gradient(ellipse at 50% 35%,#777 0,#222 45%,#000 100%)"></div><div class="" style="left:31px;top:434px;height:11px;line-height:11px;font-size:9px">L</div><div class="" style="left:56px;top:434px;height:11px;line-height:11px;font-size:9px">I</div><div class="" style="left:47px;top:447px;width:20px;height:117px;line-height:117px;background:linear-gradient(to right,#6f7184,#80829a 50%,#6f7184);border:2px solid;border-color:#55576a #a6a8ba #b4b6c6 #5d5f72"></div><div class="" style="left:57px;top:460px;width:1px;height:88px;line-height:88px;background:#e8e8f0;box-shadow:-1px 0 0 #333"></div><div class="fcap" style="left:49px;top:482px;width:16px;height:29px;line-height:29px;"></div><div class="val" style="left:28px;top:568.5px;width:66px;height:17px;line-height:17px;background:#3a8ae2;font-size:12.5px"><span class="sx" style="transform:scaleX(0.88)">-12.0</span></div><div class="bt" style="left:29px;top:589px;width:28px;height:15.5px;line-height:12px;">S</div><div class="bt" style="left:63px;top:589px;width:28px;height:15.5px;line-height:12px;">M</div><div class="bt mix" style="left:29px;top:608.5px;width:65px;height:15px;line-height:11.5px;"><span class="sx" style="transform:scaleX(0.92)">Mix</span></div><div class="bt" style="left:29px;top:627.5px;width:28px;height:15px;line-height:11.5px;">1</div><div class="bt" style="left:63px;top:627.5px;width:28px;height:15px;line-height:11.5px;">2</div><div class="bt" style="left:29px;top:646.5px;width:28px;height:15px;line-height:11.5px;">3</div><div class="bt" style="left:63px;top:646.5px;width:28px;height:15px;line-height:11.5px;">4</div><div class="bt ba" style="left:28px;top:665.5px;width:28px;height:15px;line-height:11.5px;">A</div><div class="bt bb" style="left:62px;top:665.5px;width:30px;height:15px;line-height:11.5px;"><span class="sx" style="transform:scaleX(0.85)">A>B</span></div><div class="scr" style="left:28px;top:683.5px;width:66px;height:19px;line-height:16.5px;"><span class="sx" style="transform:scaleX(0.9)">Scratch</span></div><div class="w1lo" style="left:98px;top:233px;width:74px;height:473px;line-height:473px;"></div><div class="w1lo" style="left:172px;top:233px;width:74px;height:473px;line-height:473px;"></div><div class="w1lo" style="left:246px;top:233px;width:74px;height:473px;line-height:473px;"></div><div class="w1lo" style="left:320px;top:233px;width:74px;height:473px;line-height:473px;"></div><div class="w1lo" style="left:394px;top:233px;width:74px;height:473px;line-height:473px;"></div><div class="w1lo" style="left:468px;top:233px;width:74px;height:473px;line-height:473px;"></div><div class="w1lo" style="left:542px;top:233px;width:74px;height:473px;line-height:473px;"></div><div class="w1lo" style="left:616px;top:233px;width:74px;height:473px;line-height:473px;"></div><div class="w1lo" style="left:690px;top:233px;width:74px;height:473px;line-height:473px;"></div><div class="w1lo" style="left:764px;top:233px;width:74px;height:473px;line-height:473px;"></div><div class="w1lo" style="left:838px;top:233px;width:74px;height:473px;line-height:473px;"></div><div class="w2" style="left:73px;top:124px;width:1246.5px;height:692px;line-height:692px;"></div><div class="led" style="left:94px;top:140px;width:8px;height:8px;line-height:8px;"></div><div class="" style="left:1084px;top:136px;height:12px;line-height:12px;font-size:10.5px;letter-spacing:.2px;word-spacing:1px">Global Skins</div><div class="bd c" style="left:1152.5px;top:135.5px;width:13px;height:13px;line-height:13px;background:#000;border:1px solid #999;font-size:11.5px;line-height:11px">X</div><div class="kn kl" style="left:1174.5px;top:136.5px;width:11px;height:11px;line-height:11px;"></div><div class="" style="left:1202px;top:136px;height:12px;line-height:12px;font-size:10.5px;letter-spacing:.1px">Image</div><div class="kn kl" style="left:1238px;top:137px;width:11px;height:11px;line-height:11px;"></div><div class="rb" style="left:1263px;top:136.5px;width:14px;height:14px;line-height:14px;"><i style="top:4px"></i><i style="top:7px;background:#5a5a5a"></i></div><div class="rb" style="left:1281px;top:136.5px;width:14px;height:14px;line-height:14px;">X</div><div class="w2ch" style="left:88px;top:155px;width:78px;height:173px;line-height:173px;"></div><div class="lbl" style="left:95px;top:159px;width:79.5px;height:20px;line-height:20px;">CH 1</div><div class="mc" style="left:122px;top:181px;"></div><div class="mc" style="left:133px;top:181px;"></div><div class="ov" style="left:143px;top:176px;height:10px;line-height:10px;">over</div><div class="nm" style="left:144px;top:186px;">0</div><div class="nm" style="left:144px;top:196.5px;">4</div><div class="nm" style="left:144px;top:204.5px;">6</div><div class="nm" style="left:144px;top:222px;">10</div><div class="nm" style="left:144px;top:239.5px;">20</div><div class="nm" style="left:144px;top:257.5px;">30</div><div class="nm" style="left:144px;top:269px;">40</div><div class="nm" style="left:144px;top:281.5px;">50</div><div class="nm" style="left:144px;top:293.5px;">60</div><div class="nm inf" style="left:144px;top:300.5px;">co</div><div class="cbw" style="left:94.5px;top:312.5px;width:12.5px;height:12px;line-height:12px;"></div><div class="skw" style="left:120px;top:311px;height:13px;line-height:13px;">Skin</div><div class="kn kl" style="left:144.5px;top:312px;width:11px;height:11px;line-height:11px;"></div><div class="w2lo" style="left:88px;top:329px;width:78px;height:475px;line-height:475px;"></div><div class="wl" style="left:88px;top:336px;width:76px;height:14px;line-height:14px;"><span class="sx" style="transform:scaleX(0.95)">Input Sel</span></div><div class="dd c" style="left:92px;top:354.5px;width:53px;height:13.5px;line-height:13.5px;padding:0;font-size:12px"><span class="sx" style="transform:scaleX(0.9)">Stereo</span></div><div class="arr" style="left:148.5px;top:355px;width:12px;height:12px;line-height:12px;"></div><div class="nb" style="left:91.5px;top:374.5px;width:12px;height:13px;line-height:10px;">L</div><div class="c" style="left:112px;top:375px;width:20px;height:12px;line-height:12px;font-size:10.5px">Ph</div><div class="nb" style="left:142px;top:375px;width:12px;height:12px;line-height:9px;">R</div><div class="wl" style="left:92px;top:393px;width:76px;height:14px;line-height:14px;"><span class="sx" style="transform:scaleX(0.9)">I/P Gain</span></div><div class="sl" style="left:109px;top:411px;width:47.5px;height:9px;line-height:9px;"><i style="width:30px"></i></div><div class="wl" style="left:90px;top:421px;width:76px;height:14px;line-height:14px;"><span class="sx" style="transform:scaleX(0.94)">Sends</span></div><div class="nb" style="left:92px;top:438.5px;width:11.5px;height:11.5px;line-height:8.5px;font-size:10px;line-height:9px">1</div><div class="sl" style="left:110px;top:439px;width:47px;height:9px;line-height:9px;"><i style="width:24px"></i></div><div class="nb" style="left:92px;top:457px;width:11.5px;height:11.5px;line-height:8.5px;font-size:10px;line-height:9px">2</div><div class="sl" style="left:110px;top:457.5px;width:47px;height:9px;line-height:9px;"><i style="width:24px"></i></div><div class="wl" style="left:92px;top:468.5px;width:76px;height:14px;line-height:14px;">Inserts</div><div class="nb" style="left:90.5px;top:487px;width:12.5px;height:11.5px;line-height:8.5px;font-size:10px;line-height:9px">1</div><div class="ins" style="left:108.5px;top:485px;width:46.5px;height:14px;line-height:14px;"></div><div class="nb" style="left:90.5px;top:509px;width:12.5px;height:11.5px;line-height:8.5px;font-size:10px;line-height:9px">2</div><div class="ins" style="left:108.5px;top:507px;width:46.5px;height:14px;line-height:14px;"></div><div class="sl" style="left:99.5px;top:531.5px;width:55px;height:11px;line-height:11px;border-radius:6px"></div><div class="" style="left:120px;top:531.5px;width:15px;height:10.5px;line-height:10.5px;border-radius:5px;background:radial-gradient(ellipse at 50% 35%,#888 0,#222 45%,#000 100%)"></div><div class="" style="left:101px;top:546px;height:12px;line-height:12px;font-size:9.5px">L</div><div class="" style="left:126.5px;top:546px;height:12px;line-height:12px;font-size:9.5px">I</div><div class="" style="left:148px;top:546px;height:12px;line-height:12px;font-size:9.5px">R</div><div class="" style="left:118.5px;top:560.5px;width:19.5px;height:119.5px;line-height:119.5px;background:linear-gradient(to right,#15233f,#1f3358 50%,#15233f);border:2px solid;border-color:#0c1528 #3d5484 #45608f #0f1a33"></div><div class="" style="left:128px;top:578px;width:1px;height:84px;line-height:84px;background:#aebfe6;box-shadow:-1px 0 0 #0a1226"></div><div class="fcap" style="left:120.5px;top:597px;width:15.5px;height:29px;line-height:29px;"></div><div class="val" style="left:96px;top:684px;width:66px;height:17px;line-height:17px;background:#0a40b8;font-size:12.5px"><span class="sx" style="transform:scaleX(0.88)">-12.0</span></div><div class="bt" style="left:97px;top:706.5px;width:29.5px;height:14.5px;line-height:11px;">S</div><div class="bt" style="left:131.5px;top:706.5px;width:30px;height:14.5px;line-height:11px;">M</div><div class="bt mix" style="left:96px;top:725.5px;width:65.5px;height:14.5px;line-height:11px;"><span class="sx" style="transform:scaleX(0.92)">Mix</span></div><div class="bt" style="left:97px;top:744.5px;width:29.5px;height:14.5px;line-height:11px;">1</div><div class="bt" style="left:131.5px;top:744.5px;width:30px;height:14.5px;line-height:11px;">2</div><div class="bt ba" style="left:97px;top:765.5px;width:29.5px;height:14.5px;line-height:11px;">A</div><div class="bt bb" style="left:131px;top:765.5px;width:29.5px;height:14.5px;line-height:11px;"><span class="sx" style="transform:scaleX(0.85)">A>B</span></div><div class="scr" style="left:91.5px;top:785px;width:71.5px;height:16px;line-height:13.5px;"><span class="sx" style="transform:scaleX(0.9)">Scratch</span></div><div class="w2ch" style="left:168px;top:155px;width:80px;height:173px;line-height:173px;"></div><div class="lbl" style="left:173px;top:159px;width:79.5px;height:20px;line-height:20px;">CH 2</div><div class="mc" style="left:200px;top:180px;"></div><div class="mc" style="left:211px;top:180px;"></div><div class="ov" style="left:221px;top:175px;height:10px;line-height:10px;">over</div><div class="nm" style="left:222px;top:185px;">0</div><div class="nm" style="left:222px;top:195.5px;">4</div><div class="nm" style="left:222px;top:203.5px;">6</div><div class="nm" style="left:222px;top:221px;">10</div><div class="nm" style="left:222px;top:238.5px;">20</div><div class="nm" style="left:222px;top:256.5px;">30</div><div class="nm" style="left:222px;top:268px;">40</div><div class="nm" style="left:222px;top:280.5px;">50</div><div class="nm" style="left:222px;top:292.5px;">60</div><div class="nm inf" style="left:222px;top:299.5px;">co</div><div class="cbw" style="left:176.5px;top:312.5px;width:12.5px;height:12px;line-height:12px;"></div><div class="skw" style="left:197px;top:311px;height:13px;line-height:13px;">Skin</div><div class="kn kl" style="left:224px;top:312px;width:11px;height:11px;line-height:11px;"></div><div class="w2lo" style="left:168px;top:329px;width:80px;height:475px;line-height:475px;"></div><div class="wl" style="left:170px;top:336px;width:76px;height:14px;line-height:14px;"><span class="sx" style="transform:scaleX(0.95)">Input Sel</span></div><div class="dd c" style="left:174px;top:354.5px;width:53px;height:13.5px;line-height:13.5px;padding:0;font-size:12px"><span class="sx" style="transform:scaleX(0.9)">Stereo</span></div><div class="arr" style="left:230px;top:355px;width:12px;height:12px;line-height:12px;"></div><div class="nb" style="left:173px;top:374.5px;width:12px;height:13px;line-height:10px;">L</div><div class="c" style="left:194px;top:375px;width:20px;height:12px;line-height:12px;font-size:10.5px">Ph</div><div class="nb" style="left:224px;top:375px;width:12px;height:12px;line-height:9px;">R</div><div class="wl" style="left:174px;top:393px;width:76px;height:14px;line-height:14px;"><span class="sx" style="transform:scaleX(0.9)">I/P Gain</span></div><div class="sl" style="left:191px;top:411px;width:47.5px;height:9px;line-height:9px;"><i style="width:30px"></i></div><div class="wl" style="left:172px;top:421px;width:76px;height:14px;line-height:14px;"><span class="sx" style="transform:scaleX(0.94)">Sends</span></div><div class="nb" style="left:174px;top:438.5px;width:11.5px;height:11.5px;line-height:8.5px;font-size:10px;line-height:9px">1</div><div class="sl" style="left:192px;top:439px;width:47px;height:9px;line-height:9px;"><i style="width:24px"></i></div><div class="nb" style="left:174px;top:457px;width:11.5px;height:11.5px;line-height:8.5px;font-size:10px;line-height:9px">2</div><div class="sl" style="left:192px;top:457.5px;width:47px;height:9px;line-height:9px;"><i style="width:24px"></i></div><div class="wl" style="left:174px;top:468.5px;width:76px;height:14px;line-height:14px;">Inserts</div><div class="nb" style="left:172px;top:487px;width:12.5px;height:11.5px;line-height:8.5px;font-size:10px;line-height:9px">1</div><div class="ins" style="left:190px;top:485px;width:46.5px;height:14px;line-height:14px;"></div><div class="nb" style="left:172px;top:509px;width:12.5px;height:11.5px;line-height:8.5px;font-size:10px;line-height:9px">2</div><div class="ins" style="left:190px;top:507px;width:46.5px;height:14px;line-height:14px;"></div><div class="sl" style="left:181px;top:531.5px;width:55px;height:11px;line-height:11px;border-radius:6px"></div><div class="" style="left:202px;top:531.5px;width:15px;height:10.5px;line-height:10.5px;border-radius:5px;background:radial-gradient(ellipse at 50% 35%,#888 0,#222 45%,#000 100%)"></div><div class="" style="left:183px;top:546px;height:12px;line-height:12px;font-size:9.5px">L</div><div class="" style="left:208px;top:546px;height:12px;line-height:12px;font-size:9.5px">I</div><div class="" style="left:230px;top:546px;height:12px;line-height:12px;font-size:9.5px">R</div><div class="" style="left:200px;top:560.5px;width:19.5px;height:119.5px;line-height:119.5px;background:linear-gradient(to right,#15233f,#1f3358 50%,#15233f);border:2px solid;border-color:#0c1528 #3d5484 #45608f #0f1a33"></div><div class="" style="left:210px;top:578px;width:1px;height:84px;line-height:84px;background:#aebfe6;box-shadow:-1px 0 0 #0a1226"></div><div class="fcap" style="left:202px;top:597px;width:15.5px;height:29px;line-height:29px;"></div><div class="val" style="left:178px;top:684px;width:66px;height:17px;line-height:17px;background:#0a40b8;font-size:12.5px"><span class="sx" style="transform:scaleX(0.88)">-12.0</span></div><div class="bt" style="left:178.5px;top:706.5px;width:29.5px;height:14.5px;line-height:11px;">S</div><div class="bt" style="left:213px;top:706.5px;width:30px;height:14.5px;line-height:11px;">M</div><div class="bt mix" style="left:177.5px;top:725.5px;width:65.5px;height:14.5px;line-height:11px;"><span class="sx" style="transform:scaleX(0.92)">Mix</span></div><div class="bt" style="left:178.5px;top:744.5px;width:29.5px;height:14.5px;line-height:11px;">1</div><div class="bt" style="left:213px;top:744.5px;width:30px;height:14.5px;line-height:11px;">2</div><div class="bt ba" style="left:178.5px;top:765.5px;width:29.5px;height:14.5px;line-height:11px;">A</div><div class="bt bb" style="left:213px;top:765.5px;width:29.5px;height:14.5px;line-height:11px;"><span class="sx" style="transform:scaleX(0.85)">A>B</span></div><div class="scr" style="left:173px;top:785px;width:71.5px;height:16px;line-height:13.5px;"><span class="sx" style="transform:scaleX(0.9)">Scratch</span></div><div class="w2ch" style="left:250px;top:155px;width:79.5px;height:173px;line-height:173px;"></div><div class="lbl" style="left:256px;top:159px;width:79.5px;height:20px;line-height:20px;">CH 3</div><div class="mc" style="left:283px;top:181px;"></div><div class="mc" style="left:294px;top:181px;"></div><div class="ov" style="left:304px;top:176px;height:10px;line-height:10px;">over</div><div class="nm" style="left:305px;top:186px;">0</div><div class="nm" style="left:305px;top:196.5px;">4</div><div class="nm" style="left:305px;top:204.5px;">6</div><div class="nm" style="left:305px;top:222px;">10</div><div class="nm" style="left:305px;top:239.5px;">20</div><div class="nm" style="left:305px;top:257.5px;">30</div><div class="nm" style="left:305px;top:269px;">40</div><div class="nm" style="left:305px;top:281.5px;">50</div><div class="nm" style="left:305px;top:293.5px;">60</div><div class="nm inf" style="left:305px;top:300.5px;">co</div><div class="cbw" style="left:259.5px;top:312.5px;width:12.5px;height:12px;line-height:12px;"></div><div class="skw" style="left:280px;top:311px;height:13px;line-height:13px;">Skin</div><div class="kn kl" style="left:305.5px;top:312px;width:11px;height:11px;line-height:11px;"></div><div class="w2lo" style="left:250px;top:329px;width:79.5px;height:475px;line-height:475px;"></div><div class="wl" style="left:251.5px;top:336px;width:76px;height:14px;line-height:14px;"><span class="sx" style="transform:scaleX(0.95)">Input Sel</span></div><div class="dd c" style="left:255.5px;top:354.5px;width:53px;height:13.5px;line-height:13.5px;padding:0;font-size:12px"><span class="sx" style="transform:scaleX(0.9)">Stereo</span></div><div class="arr" style="left:312px;top:355px;width:12px;height:12px;line-height:12px;"></div><div class="nb" style="left:255px;top:374.5px;width:12px;height:13px;line-height:10px;">L</div><div class="c" style="left:275.5px;top:375px;width:20px;height:12px;line-height:12px;font-size:10.5px">Ph</div><div class="nb" style="left:305.5px;top:373.5px;width:12px;height:12px;line-height:9px;">R</div><div class="wl" style="left:255.5px;top:393px;width:76px;height:14px;line-height:14px;"><span class="sx" style="transform:scaleX(0.9)">I/P Gain</span></div><div class="sl" style="left:272.5px;top:411px;width:47.5px;height:9px;line-height:9px;"><i style="width:30px"></i></div><div class="wl" style="left:253.5px;top:421px;width:76px;height:14px;line-height:14px;"><span class="sx" style="transform:scaleX(0.94)">Sends</span></div><div class="nb" style="left:255.5px;top:438.5px;width:11.5px;height:11.5px;line-height:8.5px;font-size:10px;line-height:9px">1</div><div class="sl" style="left:273.5px;top:439px;width:47px;height:9px;line-height:9px;"><i style="width:24px"></i></div><div class="nb" style="left:255.5px;top:457px;width:11.5px;height:11.5px;line-height:8.5px;font-size:10px;line-height:9px">2</div><div class="sl" style="left:273.5px;top:457.5px;width:47px;height:9px;line-height:9px;"><i style="width:24px"></i></div><div class="wl" style="left:255.5px;top:468.5px;width:76px;height:14px;line-height:14px;">Inserts</div><div class="nb" style="left:254px;top:487px;width:12.5px;height:11.5px;line-height:8.5px;font-size:10px;line-height:9px">1</div><div class="ins" style="left:272px;top:485px;width:46.5px;height:14px;line-height:14px;"></div><div class="nb" style="left:254px;top:509px;width:12.5px;height:11.5px;line-height:8.5px;font-size:10px;line-height:9px">2</div><div class="ins" style="left:272px;top:507px;width:46.5px;height:14px;line-height:14px;"></div><div class="sl" style="left:263px;top:531.5px;width:55px;height:11px;line-height:11px;border-radius:6px"></div><div class="" style="left:283.5px;top:531.5px;width:15px;height:10.5px;line-height:10.5px;border-radius:5px;background:radial-gradient(ellipse at 50% 35%,#888 0,#222 45%,#000 100%)"></div><div class="" style="left:264.5px;top:546px;height:12px;line-height:12px;font-size:9.5px">L</div><div class="" style="left:290px;top:546px;height:12px;line-height:12px;font-size:9.5px">I</div><div class="" style="left:311.5px;top:546px;height:12px;line-height:12px;font-size:9.5px">R</div><div class="" style="left:282px;top:560.5px;width:19.5px;height:119.5px;line-height:119.5px;background:linear-gradient(to right,#15233f,#1f3358 50%,#15233f);border:2px solid;border-color:#0c1528 #3d5484 #45608f #0f1a33"></div><div class="" style="left:291.5px;top:578px;width:1px;height:84px;line-height:84px;background:#aebfe6;box-shadow:-1px 0 0 #0a1226"></div><div class="fcap" style="left:284px;top:597px;width:15.5px;height:29px;line-height:29px;"></div><div class="val" style="left:259.5px;top:684px;width:66px;height:17px;line-height:17px;background:#0a40b8;font-size:12.5px"><span class="sx" style="transform:scaleX(0.88)">-12.0</span></div><div class="bt" style="left:260.5px;top:706.5px;width:29.5px;height:14.5px;line-height:11px;">S</div><div class="bt" style="left:295px;top:706.5px;width:30px;height:14.5px;line-height:11px;">M</div><div class="bt mix" style="left:259.5px;top:725.5px;width:65.5px;height:14.5px;line-height:11px;"><span class="sx" style="transform:scaleX(0.92)">Mix</span></div><div class="bt" style="left:260.5px;top:744.5px;width:29.5px;height:14.5px;line-height:11px;">1</div><div class="bt" style="left:295px;top:744.5px;width:30px;height:14.5px;line-height:11px;">2</div><div class="bt ba" style="left:260.5px;top:765.5px;width:29.5px;height:14.5px;line-height:11px;">A</div><div class="bt bb" style="left:294.5px;top:765.5px;width:29.5px;height:14.5px;line-height:11px;"><span class="sx" style="transform:scaleX(0.85)">A>B</span></div><div class="scr" style="left:255px;top:785px;width:71.5px;height:16px;line-height:13.5px;"><span class="sx" style="transform:scaleX(0.9)">Scratch</span></div><div class="w2ch" style="left:332px;top:155px;width:80px;height:173px;line-height:173px;"></div><div class="lbl" style="left:336px;top:159px;width:79.5px;height:20px;line-height:20px;">CH 4</div><div class="mc" style="left:365px;top:181px;"></div><div class="mc" style="left:376px;top:181px;"></div><div class="ov" style="left:386px;top:176px;height:10px;line-height:10px;">over</div><div class="nm" style="left:387px;top:186px;">0</div><div class="nm" style="left:387px;top:196.5px;">4</div><div class="nm" style="left:387px;top:204.5px;">6</div><div class="nm" style="left:387px;top:222px;">10</div><div class="nm" style="left:387px;top:239.5px;">20</div><div class="nm" style="left:387px;top:257.5px;">30</div><div class="nm" style="left:387px;top:269px;">40</div><div class="nm" style="left:387px;top:281.5px;">50</div><div class="nm" style="left:387px;top:293.5px;">60</div><div class="nm inf" style="left:387px;top:300.5px;">co</div><div class="cbw" style="left:340px;top:312.5px;width:12.5px;height:12px;line-height:12px;"></div><div class="skw" style="left:360px;top:311px;height:13px;line-height:13px;">Skin</div><div class="kn kl" style="left:386px;top:312px;width:11px;height:11px;line-height:11px;"></div><div class="w2lo" style="left:332px;top:329px;width:80px;height:475px;line-height:475px;"></div><div class="wl" style="left:333px;top:336px;width:76px;height:14px;line-height:14px;"><span class="sx" style="transform:scaleX(0.95)">Input Sel</span></div><div class="dd c" style="left:337px;top:354.5px;width:53px;height:13.5px;line-height:13.5px;padding:0;font-size:12px"><span class="sx" style="transform:scaleX(0.9)">Stereo</span></div><div class="arr" style="left:394px;top:355px;width:12px;height:12px;line-height:12px;"></div><div class="nb" style="left:337px;top:374.5px;width:12px;height:13px;line-height:10px;">L</div><div class="c" style="left:357px;top:375px;width:20px;height:12px;line-height:12px;font-size:10.5px">Ph</div><div class="nb" style="left:387px;top:375px;width:12px;height:12px;line-height:9px;">R</div><div class="wl" style="left:337px;top:393px;width:76px;height:14px;line-height:14px;"><span class="sx" style="transform:scaleX(0.9)">I/P Gain</span></div><div class="sl" style="left:354px;top:411px;width:47.5px;height:9px;line-height:9px;"><i style="width:30px"></i></div><div class="wl" style="left:335px;top:421px;width:76px;height:14px;line-height:14px;"><span class="sx" style="transform:scaleX(0.94)">Sends</span></div><div class="nb" style="left:337px;top:438.5px;width:11.5px;height:11.5px;line-height:8.5px;font-size:10px;line-height:9px">1</div><div class="sl" style="left:355px;top:439px;width:47px;height:9px;line-height:9px;"><i style="width:24px"></i></div><div class="nb" style="left:337px;top:457px;width:11.5px;height:11.5px;line-height:8.5px;font-size:10px;line-height:9px">2</div><div class="sl" style="left:355px;top:457.5px;width:47px;height:9px;line-height:9px;"><i style="width:24px"></i></div><div class="wl" style="left:337px;top:468.5px;width:76px;height:14px;line-height:14px;">Inserts</div><div class="nb" style="left:336px;top:487px;width:12.5px;height:11.5px;line-height:8.5px;font-size:10px;line-height:9px">1</div><div class="ins" style="left:354px;top:485px;width:46.5px;height:14px;line-height:14px;"></div><div class="nb" style="left:336px;top:509px;width:12.5px;height:11.5px;line-height:8.5px;font-size:10px;line-height:9px">2</div><div class="ins" style="left:354px;top:507px;width:46.5px;height:14px;line-height:14px;"></div><div class="w2ch" style="left:414px;top:155px;width:80px;height:173px;line-height:173px;"></div><div class="lbl" style="left:415px;top:159px;width:79.5px;height:20px;line-height:20px;">CH 5</div><div class="mc" style="left:444px;top:182px;"></div><div class="mc" style="left:455px;top:182px;"></div><div class="ov" style="left:465px;top:177px;height:10px;line-height:10px;">over</div><div class="nm" style="left:466px;top:187px;">0</div><div class="nm" style="left:466px;top:197.5px;">4</div><div class="nm" style="left:466px;top:205.5px;">6</div><div class="nm" style="left:466px;top:223px;">10</div><div class="nm" style="left:466px;top:240.5px;">20</div><div class="nm" style="left:466px;top:258.5px;">30</div><div class="nm" style="left:466px;top:270px;">40</div><div class="nm" style="left:466px;top:282.5px;">50</div><div class="nm" style="left:466px;top:294.5px;">60</div><div class="nm inf" style="left:466px;top:301.5px;">co</div><div class="cbw" style="left:421.5px;top:312.5px;width:12.5px;height:12px;line-height:12px;"></div><div class="skw" style="left:440.5px;top:311px;height:13px;line-height:13px;">Skin</div><div class="kn kl" style="left:466px;top:312px;width:11px;height:11px;line-height:11px;"></div><div class="w2lo" style="left:414px;top:329px;width:80px;height:475px;line-height:475px;"></div><div class="wl" style="left:415px;top:336px;width:76px;height:14px;line-height:14px;"><span class="sx" style="transform:scaleX(0.95)">Input Sel</span></div><div class="dd c" style="left:419px;top:354.5px;width:53px;height:13.5px;line-height:13.5px;padding:0;font-size:12px"><span class="sx" style="transform:scaleX(0.9)">Stereo</span></div><div class="arr" style="left:475.5px;top:355px;width:12px;height:12px;line-height:12px;"></div><div class="nb" style="left:418.5px;top:374.5px;width:12px;height:13px;line-height:10px;">L</div><div class="c" style="left:439px;top:375px;width:20px;height:12px;line-height:12px;font-size:10.5px">Ph</div><div class="nb" style="left:469px;top:375px;width:12px;height:12px;line-height:9px;">R</div><div class="wl" style="left:419px;top:393px;width:76px;height:14px;line-height:14px;"><span class="sx" style="transform:scaleX(0.9)">I/P Gain</span></div><div class="sl" style="left:436px;top:411px;width:47.5px;height:9px;line-height:9px;"><i style="width:30px"></i></div><div class="wl" style="left:417px;top:421px;width:76px;height:14px;line-height:14px;"><span class="sx" style="transform:scaleX(0.94)">Sends</span></div><div class="nb" style="left:419px;top:438.5px;width:11.5px;height:11.5px;line-height:8.5px;font-size:10px;line-height:9px">1</div><div class="sl" style="left:437px;top:439px;width:47px;height:9px;line-height:9px;"><i style="width:24px"></i></div><div class="nb" style="left:419px;top:457px;width:11.5px;height:11.5px;line-height:8.5px;font-size:10px;line-height:9px">2</div><div class="sl" style="left:437px;top:457.5px;width:47px;height:9px;line-height:9px;"><i style="width:24px"></i></div><div class="wl" style="left:419px;top:468.5px;width:76px;height:14px;line-height:14px;">Inserts</div><div class="nb" style="left:417.5px;top:487px;width:12.5px;height:11.5px;line-height:8.5px;font-size:10px;line-height:9px">1</div><div class="ins" style="left:435.5px;top:485px;width:46.5px;height:14px;line-height:14px;"></div><div class="nb" style="left:417.5px;top:509px;width:12.5px;height:11.5px;line-height:8.5px;font-size:10px;line-height:9px">2</div><div class="ins" style="left:435.5px;top:507px;width:46.5px;height:14px;line-height:14px;"></div><div class="w2ch" style="left:497px;top:155px;width:79px;height:173px;line-height:173px;"></div><div class="lbl" style="left:497px;top:159px;width:79.5px;height:20px;line-height:20px;">CH 6</div><div class="mc" style="left:526px;top:181px;"></div><div class="mc" style="left:537px;top:181px;"></div><div class="ov" style="left:547px;top:176px;height:10px;line-height:10px;">over</div><div class="nm" style="left:548px;top:186px;">0</div><div class="nm" style="left:548px;top:196.5px;">4</div><div class="nm" style="left:548px;top:204.5px;">6</div><div class="nm" style="left:548px;top:222px;">10</div><div class="nm" style="left:548px;top:239.5px;">20</div><div class="nm" style="left:548px;top:257.5px;">30</div><div class="nm" style="left:548px;top:269px;">40</div><div class="nm" style="left:548px;top:281.5px;">50</div><div class="nm" style="left:548px;top:293.5px;">60</div><div class="nm inf" style="left:548px;top:300.5px;">co</div><div class="cbw" style="left:503px;top:312.5px;width:12.5px;height:12px;line-height:12px;"></div><div class="skw" style="left:522.5px;top:311px;height:13px;line-height:13px;">Skin</div><div class="kn kl" style="left:548px;top:312px;width:11px;height:11px;line-height:11px;"></div><div class="w2lo" style="left:497px;top:329px;width:79px;height:475px;line-height:475px;"></div><div class="wl" style="left:497px;top:336px;width:76px;height:14px;line-height:14px;"><span class="sx" style="transform:scaleX(0.95)">Input Sel</span></div><div class="dd c" style="left:501px;top:354.5px;width:53px;height:13.5px;line-height:13.5px;padding:0;font-size:12px"><span class="sx" style="transform:scaleX(0.9)">Stereo</span></div><div class="arr" style="left:557px;top:355px;width:12px;height:12px;line-height:12px;"></div><div class="nb" style="left:500px;top:374.5px;width:12px;height:13px;line-height:10px;">L</div><div class="c" style="left:521px;top:375px;width:20px;height:12px;line-height:12px;font-size:10.5px">Ph</div><div class="nb" style="left:551px;top:375px;width:12px;height:12px;line-height:9px;">R</div><div class="wl" style="left:501px;top:393px;width:76px;height:14px;line-height:14px;"><span class="sx" style="transform:scaleX(0.9)">I/P Gain</span></div><div class="sl" style="left:518px;top:411px;width:47.5px;height:9px;line-height:9px;"><i style="width:30px"></i></div><div class="wl" style="left:499px;top:421px;width:76px;height:14px;line-height:14px;"><span class="sx" style="transform:scaleX(0.94)">Sends</span></div><div class="nb" style="left:501px;top:438.5px;width:11.5px;height:11.5px;line-height:8.5px;font-size:10px;line-height:9px">1</div><div class="sl" style="left:519px;top:439px;width:47px;height:9px;line-height:9px;"><i style="width:24px"></i></div><div class="nb" style="left:501px;top:457px;width:11.5px;height:11.5px;line-height:8.5px;font-size:10px;line-height:9px">2</div><div class="sl" style="left:519px;top:457.5px;width:47px;height:9px;line-height:9px;"><i style="width:24px"></i></div><div class="wl" style="left:501px;top:468.5px;width:76px;height:14px;line-height:14px;">Inserts</div><div class="nb" style="left:499px;top:487px;width:12.5px;height:11.5px;line-height:8.5px;font-size:10px;line-height:9px">1</div><div class="ins" style="left:517px;top:485px;width:46.5px;height:14px;line-height:14px;"></div><div class="nb" style="left:499px;top:509px;width:12.5px;height:11.5px;line-height:8.5px;font-size:10px;line-height:9px">2</div><div class="ins" style="left:517px;top:507px;width:46.5px;height:14px;line-height:14px;"></div><div class="w2ch" style="left:578.5px;top:155px;width:79.5px;height:173px;line-height:173px;"></div><div class="lbl" style="left:577.5px;top:159px;width:79.5px;height:20px;line-height:20px;">CH 7</div><div class="mc" style="left:605px;top:181px;"></div><div class="mc" style="left:616px;top:181px;"></div><div class="ov" style="left:626px;top:176px;height:10px;line-height:10px;">over</div><div class="nm" style="left:627px;top:186px;">0</div><div class="nm" style="left:627px;top:196.5px;">4</div><div class="nm" style="left:627px;top:204.5px;">6</div><div class="nm" style="left:627px;top:222px;">10</div><div class="nm" style="left:627px;top:239.5px;">20</div><div class="nm" style="left:627px;top:257.5px;">30</div><div class="nm" style="left:627px;top:269px;">40</div><div class="nm" style="left:627px;top:281.5px;">50</div><div class="nm" style="left:627px;top:293.5px;">60</div><div class="nm inf" style="left:627px;top:300.5px;">co</div><div class="cbw" style="left:585px;top:312.5px;width:12.5px;height:12px;line-height:12px;"></div><div class="skw" style="left:604px;top:311px;height:13px;line-height:13px;">Skin</div><div class="kn kl" style="left:629px;top:312px;width:11px;height:11px;line-height:11px;"></div><div class="w2lo" style="left:578.5px;top:329px;width:79.5px;height:475px;line-height:475px;"></div><div class="wl" style="left:578.5px;top:336px;width:76px;height:14px;line-height:14px;"><span class="sx" style="transform:scaleX(0.95)">Input Sel</span></div><div class="dd c" style="left:582.5px;top:354.5px;width:53px;height:13.5px;line-height:13.5px;padding:0;font-size:12px"><span class="sx" style="transform:scaleX(0.9)">Stereo</span></div><div class="arr" style="left:639px;top:355px;width:12px;height:12px;line-height:12px;"></div><div class="nb" style="left:582px;top:374.5px;width:12px;height:13px;line-height:10px;">L</div><div class="c" style="left:602.5px;top:375px;width:20px;height:12px;line-height:12px;font-size:10.5px">Ph</div><div class="nb" style="left:632.5px;top:375px;width:12px;height:12px;line-height:9px;">R</div><div class="wl" style="left:582.5px;top:393px;width:76px;height:14px;line-height:14px;"><span class="sx" style="transform:scaleX(0.9)">I/P Gain</span></div><div class="sl" style="left:599.5px;top:411px;width:47.5px;height:9px;line-height:9px;"><i style="width:30px"></i></div><div class="wl" style="left:580.5px;top:421px;width:76px;height:14px;line-height:14px;"><span class="sx" style="transform:scaleX(0.94)">Sends</span></div><div class="nb" style="left:582.5px;top:438.5px;width:11.5px;height:11.5px;line-height:8.5px;font-size:10px;line-height:9px">1</div><div class="sl" style="left:600.5px;top:439px;width:47px;height:9px;line-height:9px;"><i style="width:24px"></i></div><div class="nb" style="left:582.5px;top:457px;width:11.5px;height:11.5px;line-height:8.5px;font-size:10px;line-height:9px">2</div><div class="sl" style="left:600.5px;top:457.5px;width:47px;height:9px;line-height:9px;"><i style="width:24px"></i></div><div class="wl" style="left:582.5px;top:468.5px;width:76px;height:14px;line-height:14px;">Inserts</div><div class="nb" style="left:581px;top:487px;width:12.5px;height:11.5px;line-height:8.5px;font-size:10px;line-height:9px">1</div><div class="ins" style="left:599px;top:485px;width:46.5px;height:14px;line-height:14px;"></div><div class="nb" style="left:581px;top:509px;width:12.5px;height:11.5px;line-height:8.5px;font-size:10px;line-height:9px">2</div><div class="ins" style="left:599px;top:507px;width:46.5px;height:14px;line-height:14px;"></div><div class="w2ch" style="left:660.5px;top:155px;width:79.5px;height:173px;line-height:173px;"></div><div class="lbl" style="left:655px;top:159px;width:79.5px;height:20px;line-height:20px;">CH 8</div><div class="mc" style="left:684px;top:181px;"></div><div class="mc" style="left:695px;top:181px;"></div><div class="ov" style="left:705px;top:176px;height:10px;line-height:10px;">over</div><div class="nm" style="left:706px;top:186px;">0</div><div class="nm" style="left:706px;top:196.5px;">4</div><div class="nm" style="left:706px;top:204.5px;">6</div><div class="nm" style="left:706px;top:222px;">10</div><div class="nm" style="left:706px;top:239.5px;">20</div><div class="nm" style="left:706px;top:257.5px;">30</div><div class="nm" style="left:706px;top:269px;">40</div><div class="nm" style="left:706px;top:281.5px;">50</div><div class="nm" style="left:706px;top:293.5px;">60</div><div class="nm inf" style="left:706px;top:300.5px;">co</div><div class="cbw" style="left:667px;top:312.5px;width:12.5px;height:12px;line-height:12px;"></div><div class="skw" style="left:684px;top:311px;height:13px;line-height:13px;">Skin</div><div class="kn kl" style="left:708.5px;top:312px;width:11px;height:11px;line-height:11px;"></div><div class="w2lo" style="left:660.5px;top:329px;width:79.5px;height:475px;line-height:475px;"></div><div class="wl" style="left:661px;top:336px;width:76px;height:14px;line-height:14px;"><span class="sx" style="transform:scaleX(0.95)">Input Sel</span></div><div class="dd c" style="left:665px;top:354.5px;width:53px;height:13.5px;line-height:13.5px;padding:0;font-size:12px"><span class="sx" style="transform:scaleX(0.9)">Stereo</span></div><div class="arr" style="left:722px;top:355px;width:12px;height:12px;line-height:12px;"></div><div class="nb" style="left:665px;top:374.5px;width:12px;height:13px;line-height:10px;">L</div><div class="c" style="left:685px;top:375px;width:20px;height:12px;line-height:12px;font-size:10.5px">Ph</div><div class="nb" style="left:715px;top:375px;width:12px;height:12px;line-height:9px;">R</div><div class="wl" style="left:665px;top:393px;width:76px;height:14px;line-height:14px;"><span class="sx" style="transform:scaleX(0.9)">I/P Gain</span></div><div class="sl" style="left:682px;top:411px;width:47.5px;height:9px;line-height:9px;"><i style="width:30px"></i></div><div class="wl" style="left:663px;top:421px;width:76px;height:14px;line-height:14px;"><span class="sx" style="transform:scaleX(0.94)">Sends</span></div><div class="nb" style="left:665px;top:438.5px;width:11.5px;height:11.5px;line-height:8.5px;font-size:10px;line-height:9px">1</div><div class="sl" style="left:683px;top:439px;width:47px;height:9px;line-height:9px;"><i style="width:24px"></i></div><div class="nb" style="left:665px;top:457px;width:11.5px;height:11.5px;line-height:8.5px;font-size:10px;line-height:9px">2</div><div class="sl" style="left:683px;top:457.5px;width:47px;height:9px;line-height:9px;"><i style="width:24px"></i></div><div class="wl" style="left:665px;top:468.5px;width:76px;height:14px;line-height:14px;">Inserts</div><div class="nb" style="left:664px;top:487px;width:12.5px;height:11.5px;line-height:8.5px;font-size:10px;line-height:9px">1</div><div class="ins" style="left:682px;top:485px;width:46.5px;height:14px;line-height:14px;"></div><div class="nb" style="left:664px;top:509px;width:12.5px;height:11.5px;line-height:8.5px;font-size:10px;line-height:9px">2</div><div class="ins" style="left:682px;top:507px;width:46.5px;height:14px;line-height:14px;"></div><div class="" style="left:741.5px;top:155px;width:464.5px;height:132px;line-height:132px;background:#9a9a98;border:1px solid #d0d0ce;border-right-color:#666;border-bottom-color:#555"></div><div class="gal" style="left:745px;top:158px;width:457.5px;height:127px;line-height:127px;"><i class="star" style="left:225px;top:12px;opacity:0.27"></i><i class="star" style="left:84px;top:7px;opacity:0.43"></i><i class="star" style="left:108px;top:26px;opacity:0.34"></i><i class="star" style="left:319px;top:16px;opacity:0.13"></i><i class="star" style="left:282px;top:29px;opacity:0.15"></i><i class="star" style="left:106px;top:38px;opacity:0.28"></i><i class="star" style="left:349px;top:10px;opacity:0.48"></i><i class="star" style="left:382px;top:43px;opacity:0.34"></i><i class="star" style="left:91px;top:39px;opacity:0.34"></i><i class="star" style="left:85px;top:17px;opacity:0.14"></i><i class="star" style="left:128px;top:21px;opacity:0.28"></i><i class="star" style="left:336px;top:10px;opacity:0.34"></i><i class="star" style="left:346px;top:55px;opacity:0.38"></i><i class="star" style="left:112px;top:40px;opacity:0.34"></i><i class="star" style="left:156px;top:26px;opacity:0.16"></i><i class="star" style="left:424px;top:7px;opacity:0.33"></i><i class="star" style="left:376px;top:16px;opacity:0.31"></i><i class="star" style="left:332px;top:30px;opacity:0.42"></i><i class="star" style="left:298px;top:40px;opacity:0.47"></i><i class="star" style="left:245px;top:22px;opacity:0.21"></i><i class="star" style="left:152px;top:47px;opacity:0.42"></i><i class="star" style="left:101px;top:39px;opacity:0.23"></i><i class="star" style="left:313px;top:24px;opacity:0.40"></i><i class="star" style="left:207px;top:41px;opacity:0.49"></i><i class="star" style="left:120px;top:35px;opacity:0.28"></i><i class="star" style="left:235px;top:12px;opacity:0.47"></i><i class="star" style="left:275px;top:5px;opacity:0.49"></i><i class="star" style="left:99px;top:51px;opacity:0.33"></i><i class="star" style="left:220px;top:24px;opacity:0.38"></i><i class="star" style="left:364px;top:34px;opacity:0.34"></i><i class="star" style="left:293px;top:7px;opacity:0.44"></i><i class="star" style="left:198px;top:33px;opacity:0.38"></i><i class="star" style="left:93px;top:6px;opacity:0.40"></i><i class="star" style="left:218px;top:44px;opacity:0.34"></i><i class="star" style="left:408px;top:55px;opacity:0.29"></i><i class="star" style="left:426px;top:27px;opacity:0.46"></i><i class="star" style="left:237px;top:4px;opacity:0.48"></i><i class="star" style="left:241px;top:13px;opacity:0.35"></i><i class="star" style="left:312px;top:6px;opacity:0.20"></i><i class="star" style="left:207px;top:11px;opacity:0.40"></i><i class="star" style="left:263px;top:28px;opacity:0.47"></i><i class="star" style="left:314px;top:8px;opacity:0.18"></i><i class="star" style="left:265px;top:38px;opacity:0.23"></i><i class="star" style="left:130px;top:55px;opacity:0.28"></i><i class="star" style="left:341px;top:20px;opacity:0.39"></i><i class="star" style="left:243px;top:46px;opacity:0.46"></i><i class="star" style="left:178px;top:12px;opacity:0.15"></i><i class="star" style="left:137px;top:17px;opacity:0.37"></i><i class="star" style="left:66px;top:34px;opacity:0.44"></i><i class="star" style="left:153px;top:19px;opacity:0.23"></i><i class="star" style="left:134px;top:29px;opacity:0.32"></i><i class="star" style="left:372px;top:39px;opacity:0.24"></i><i class="star" style="left:124px;top:47px;opacity:0.45"></i><i class="star" style="left:376px;top:44px;opacity:0.38"></i><i class="star" style="left:87px;top:32px;opacity:0.46"></i><i class="star" style="left:408px;top:54px;opacity:0.33"></i><i class="star" style="left:263px;top:28px;opacity:0.27"></i><i class="star" style="left:306px;top:43px;opacity:0.27"></i><i class="star" style="left:157px;top:7px;opacity:0.49"></i><i class="star" style="left:285px;top:13px;opacity:0.16"></i><i class="star" style="left:367px;top:6px;opacity:0.16"></i><i class="star" style="left:350px;top:12px;opacity:0.32"></i><i class="star" style="left:246px;top:42px;opacity:0.13"></i><i class="star" style="left:166px;top:42px;opacity:0.26"></i><i class="star" style="left:384px;top:19px;opacity:0.48"></i><i class="star" style="left:368px;top:26px;opacity:0.30"></i><i class="star" style="left:119px;top:57px;opacity:0.31"></i><i class="star" style="left:298px;top:33px;opacity:0.30"></i><i class="star" style="left:103px;top:12px;opacity:0.16"></i><i class="star" style="left:235px;top:50px;opacity:0.22"></i></div><div class="bd" style="left:747.5px;top:228px;height:64px;line-height:64px;font-size:51.5px;letter-spacing:-.5px;color:#fbfbfb;text-shadow:2px 2px 3px rgba(0,0,0,.8)">Mix 8 a/b</div><div class="" style="left:1208.5px;top:155.5px;width:99.5px;height:131px;line-height:131px;background:#232321;border:2.5px solid #6e6e60;box-shadow:inset 1px 1px 0 #a9a99a,inset -1px -1px 0 #3a3a30"></div><div class="bt ba" style="left:1213.5px;top:162.5px;width:38.5px;height:24.5px;line-height:21px;font-size:14px;background:#1f6c20;border:2px solid #0c120c;line-height:21px">A</div><div class="bt bb" style="left:1256.5px;top:162.5px;width:45px;height:24.5px;line-height:21px;font-size:14px;background:#6a210b;border:2px solid #140a06;line-height:21px"><span class="sx" style="transform:scaleX(0.85)">A>B</span></div><div class="w2btn" style="left:1214px;top:190px;width:87px;height:28px;line-height:25.5px;text-indent:-8px;line-height:27.5px">Solo Off</div><div class="w2btn" style="left:1214px;top:222.5px;width:87px;height:27px;line-height:24.5px;text-indent:-8px;line-height:30px">Mute Off</div><div class="w2btn" style="left:1214px;top:254px;width:87px;height:27.5px;line-height:25px;background:#8d8d8d;border-color:#444;text-indent:-6px">Presets</div><div class="w2ch" style="left:742px;top:288.5px;width:78.5px;height:173.5px;line-height:173.5px;"></div><div class="lbl" style="left:741px;top:291px;width:80px;height:20px;line-height:20px;letter-spacing:.2px">Bus 1</div><div class="mc" style="left:767px;top:317px;"></div><div class="mc" style="left:778px;top:317px;"></div><div class="ov" style="left:788px;top:312px;height:10px;line-height:10px;">over</div><div class="nm" style="left:789px;top:322px;">0</div><div class="nm" style="left:789px;top:332.5px;">4</div><div class="nm" style="left:789px;top:340.5px;">6</div><div class="nm" style="left:789px;top:358px;">10</div><div class="nm" style="left:789px;top:375.5px;">20</div><div class="nm" style="left:789px;top:393.5px;">30</div><div class="nm" style="left:789px;top:405px;">40</div><div class="nm" style="left:789px;top:417.5px;">50</div><div class="nm inf" style="left:789px;top:436.5px;">co</div><div class="skw" style="left:765px;top:444.5px;height:13px;line-height:13px;">Skin</div><div class="kn kr" style="left:790.5px;top:445.5px;width:11px;height:11px;line-height:11px;"></div><div class="w2lb" style="left:742px;top:463px;width:78.5px;height:341px;line-height:341px;"></div><div class="wl" style="left:746px;top:468.5px;width:76px;height:14px;line-height:14px;">Inserts</div><div class="nb" style="left:748.5px;top:487px;width:12.5px;height:11.5px;line-height:8.5px;font-size:10px;line-height:9px">1</div><div class="ins" style="left:766.5px;top:485px;width:46.5px;height:14px;line-height:14px;"></div><div class="w2ch" style="left:823px;top:288.5px;width:78.5px;height:173.5px;line-height:173.5px;"></div><div class="lbl" style="left:822px;top:291px;width:80px;height:20px;line-height:20px;letter-spacing:.2px">Bus 2</div><div class="mc" style="left:848px;top:317px;"></div><div class="mc" style="left:859px;top:317px;"></div><div class="ov" style="left:869px;top:312px;height:10px;line-height:10px;">over</div><div class="nm" style="left:870px;top:322px;">0</div><div class="nm" style="left:870px;top:332.5px;">4</div><div class="nm" style="left:870px;top:340.5px;">6</div><div class="nm" style="left:870px;top:358px;">10</div><div class="nm" style="left:870px;top:375.5px;">20</div><div class="nm" style="left:870px;top:393.5px;">30</div><div class="nm" style="left:870px;top:405px;">40</div><div class="nm" style="left:870px;top:417.5px;">50</div><div class="nm" style="left:870px;top:429.5px;">60</div><div class="nm inf" style="left:870px;top:436.5px;">co</div><div class="skw" style="left:846px;top:444.5px;height:13px;line-height:13px;">Skin</div><div class="kn kr" style="left:871.5px;top:445.5px;width:11px;height:11px;line-height:11px;"></div><div class="w2lb" style="left:823px;top:463px;width:78.5px;height:341px;line-height:341px;"></div><div class="wl" style="left:827px;top:468.5px;width:76px;height:14px;line-height:14px;">Inserts</div><div class="nb" style="left:829.5px;top:487px;width:12.5px;height:11.5px;line-height:8.5px;font-size:10px;line-height:9px">1</div><div class="ins" style="left:847.5px;top:485px;width:46.5px;height:14px;line-height:14px;"></div><div class="w2ch" style="left:904px;top:288.5px;width:78.5px;height:173.5px;line-height:173.5px;"></div><div class="lbl" style="left:903px;top:290px;width:80px;height:20px;line-height:20px;letter-spacing:.2px">Aux 1</div><div class="mc" style="left:931px;top:315px;"></div><div class="mc" style="left:942px;top:315px;"></div><div class="ov" style="left:952px;top:310px;height:10px;line-height:10px;">over</div><div class="nm" style="left:953px;top:320px;">0</div><div class="nm" style="left:953px;top:330.5px;">4</div><div class="nm" style="left:953px;top:338.5px;">6</div><div class="nm" style="left:953px;top:356px;">10</div><div class="nm" style="left:953px;top:373.5px;">20</div><div class="nm" style="left:953px;top:391.5px;">30</div><div class="nm" style="left:953px;top:403px;">40</div><div class="nm" style="left:953px;top:415.5px;">50</div><div class="nm" style="left:953px;top:427.5px;">60</div><div class="nm inf" style="left:953px;top:434.5px;">co</div><div class="skw" style="left:929px;top:443.5px;height:13px;line-height:13px;">Skin</div><div class="kn kr" style="left:954.5px;top:444.5px;width:11px;height:11px;line-height:11px;"></div><div class="w2lb" style="left:904px;top:463px;width:78.5px;height:341px;line-height:341px;"></div><div class="wl" style="left:908px;top:468.5px;width:76px;height:14px;line-height:14px;">Inserts</div><div class="nb" style="left:910.5px;top:487px;width:12.5px;height:11.5px;line-height:8.5px;font-size:10px;line-height:9px">1</div><div class="ins" style="left:928.5px;top:485px;width:46.5px;height:14px;line-height:14px;"></div><div class="w2ch" style="left:985px;top:288.5px;width:78.5px;height:173.5px;line-height:173.5px;"></div><div class="lbl" style="left:984px;top:290px;width:80px;height:20px;line-height:20px;letter-spacing:.2px">Aux 2</div><div class="mc" style="left:1007px;top:315px;"></div><div class="mc" style="left:1018px;top:315px;"></div><div class="ov" style="left:1028px;top:310px;height:10px;line-height:10px;">over</div><div class="nm" style="left:1029px;top:320px;">0</div><div class="nm" style="left:1029px;top:330.5px;">4</div><div class="nm" style="left:1029px;top:338.5px;">6</div><div class="nm" style="left:1029px;top:356px;">10</div><div class="nm" style="left:1029px;top:373.5px;">20</div><div class="nm" style="left:1029px;top:391.5px;">30</div><div class="nm" style="left:1029px;top:403px;">40</div><div class="nm" style="left:1029px;top:415.5px;">50</div><div class="nm" style="left:1029px;top:427.5px;">60</div><div class="nm inf" style="left:1029px;top:434.5px;">co</div><div class="skw" style="left:1005px;top:443.5px;height:13px;line-height:13px;">Skin</div><div class="kn kr" style="left:1030.5px;top:444.5px;width:11px;height:11px;line-height:11px;"></div><div class="w2lb" style="left:985px;top:463px;width:78.5px;height:341px;line-height:341px;"></div><div class="wl" style="left:989px;top:468.5px;width:76px;height:14px;line-height:14px;">Inserts</div><div class="nb" style="left:991.5px;top:487px;width:12.5px;height:11.5px;line-height:8.5px;font-size:10px;line-height:9px">1</div><div class="ins" style="left:1009.5px;top:485px;width:46.5px;height:14px;line-height:14px;"></div><div class="w2ch" style="left:1066px;top:288.5px;width:78.5px;height:173.5px;line-height:173.5px;"></div><div class="lbl" style="left:1064px;top:291px;width:80px;height:20px;line-height:20px;letter-spacing:.2px">Master</div><div class="mc" style="left:1091px;top:316px;"></div><div class="mc" style="left:1102px;top:316px;"></div><div class="ov" style="left:1112px;top:311px;height:10px;line-height:10px;">over</div><div class="nm" style="left:1113px;top:321px;">0</div><div class="nm" style="left:1113px;top:331.5px;">4</div><div class="nm" style="left:1113px;top:339.5px;">6</div><div class="nm" style="left:1113px;top:357px;">10</div><div class="nm" style="left:1113px;top:374.5px;">20</div><div class="nm" style="left:1113px;top:392.5px;">30</div><div class="nm" style="left:1113px;top:404px;">40</div><div class="nm" style="left:1113px;top:416.5px;">50</div><div class="nm" style="left:1113px;top:428.5px;">60</div><div class="nm inf" style="left:1113px;top:435.5px;">co</div><div class="skw" style="left:1089px;top:444px;height:13px;line-height:13px;">Skin</div><div class="kn kl" style="left:1114.5px;top:445px;width:11px;height:11px;line-height:11px;"></div><div class="w2lm" style="left:1066px;top:463px;width:78.5px;height:341px;line-height:341px;"></div><div class="wl" style="left:1071px;top:468.5px;width:76px;height:14px;line-height:14px;">Inserts</div><div class="nb" style="left:1070px;top:487px;width:12.5px;height:11.5px;line-height:8.5px;font-size:10px;line-height:9px">1</div><div class="ins" style="left:1088px;top:485px;width:46.5px;height:14px;line-height:14px;"></div><div class="w2ch" style="left:1147px;top:288.5px;width:78.5px;height:173.5px;line-height:173.5px;"></div><div class="lbl" style="left:1143.5px;top:291px;width:80px;height:20px;line-height:20px;letter-spacing:.2px">Phones</div><div class="mc" style="left:1171px;top:316px;"></div><div class="mc" style="left:1182px;top:316px;"></div><div class="ov" style="left:1192px;top:311px;height:10px;line-height:10px;">over</div><div class="nm" style="left:1193px;top:321px;">0</div><div class="nm" style="left:1193px;top:331.5px;">4</div><div class="nm" style="left:1193px;top:339.5px;">6</div><div class="nm" style="left:1193px;top:357px;">10</div><div class="nm" style="left:1193px;top:374.5px;">20</div><div class="nm" style="left:1193px;top:392.5px;">30</div><div class="nm" style="left:1193px;top:404px;">40</div><div class="nm" style="left:1193px;top:416.5px;">50</div><div class="nm" style="left:1193px;top:428.5px;">60</div><div class="nm inf" style="left:1193px;top:435.5px;">co</div><div class="skw" style="left:1169px;top:443.5px;height:13px;line-height:13px;">Skin</div><div class="kn kl" style="left:1194.5px;top:444.5px;width:11px;height:11px;line-height:11px;"></div><div class="w2lm" style="left:1147px;top:463px;width:78.5px;height:341px;line-height:341px;"></div><div class="" style="left:1163px;top:478.5px;width:43px;height:43.5px;line-height:43.5px;border:2px solid #0a0a0a;border-radius:50%"></div><div class="w2ch" style="left:1228px;top:288.5px;width:78.5px;height:173.5px;line-height:173.5px;"></div><div class="lbl" style="left:1224.5px;top:291px;width:80px;height:20px;line-height:20px;letter-spacing:.2px">Record</div><div class="mc" style="left:1251px;top:316px;"></div><div class="mc" style="left:1262px;top:316px;"></div><div class="ov" style="left:1272px;top:311px;height:10px;line-height:10px;">over</div><div class="nm" style="left:1273px;top:321px;">0</div><div class="nm" style="left:1273px;top:331.5px;">4</div><div class="nm" style="left:1273px;top:339.5px;">6</div><div class="nm" style="left:1273px;top:357px;">10</div><div class="nm" style="left:1273px;top:374.5px;">20</div><div class="nm" style="left:1273px;top:404px;">40</div><div class="nm" style="left:1273px;top:416.5px;">50</div><div class="nm" style="left:1273px;top:428.5px;">60</div><div class="nm inf" style="left:1273px;top:435.5px;">co</div><div class="skw" style="left:1249px;top:443.5px;height:13px;line-height:13px;">Skin</div><div class="kn kl" style="left:1274.5px;top:444.5px;width:11px;height:11px;line-height:11px;"></div><div class="w2lm" style="left:1228px;top:463px;width:78.5px;height:341px;line-height:341px;"></div><div class="" style="left:1240px;top:476px;width:50px;height:21px;line-height:21px;background:rgba(30,45,80,.25);border-radius:4px"><span style="left:4px;top:11px;width:7px;height:7px;border:1.5px solid #0a1020;border-radius:50%"></span><span style="left:32px;top:11px;width:7px;height:7px;border:1.5px solid #0a1020;border-radius:50%"></span><span style="left:21px;top:8px;width:1.5px;height:13px;background:#0a1020"></span><span style="left:26px;top:0;width:26px;height:21px;border-radius:50%;background:rgba(20,35,75,.45)"></span><span style="left:13px;top:6px;width:4px;height:2.5px;background:#0a1020;transform:rotate(-30deg)"></span><span style="left:41px;top:3px;width:2.5px;height:5px;background:#0a1020;transform:rotate(25deg)"></span><span style="left:24px;top:16px;width:4px;height:2.5px;background:#0a1020"></span></div><div class="w3" style="left:234.5px;top:496px;width:1158px;height:344px;line-height:344px;"></div><div class="tab" style="left:252px;top:510px;width:74px;height:29px;line-height:29px;background:#6b6b64;line-height:31px"><span class="sx" style="transform:scaleX(0.9)">Controls</span></div><div class="led" style="left:343.5px;top:520px;width:8px;height:8px;line-height:8px;"></div><div class="bd" style="left:360.5px;top:510px;height:28px;line-height:28px;font-size:21px;text-shadow:1.5px 4px 0 rgba(128,72,66,.95)">Mix 8 a/b LP</div><div class="hbtn" style="left:582.5px;top:512px;width:64.5px;height:22.5px;line-height:20px;"><span class="sx" style="transform:scaleX(0.93)">Solo Off</span></div><div class="hbtn" style="left:651px;top:512px;width:64.5px;height:22.5px;line-height:20px;"><span class="sx" style="transform:scaleX(0.93)">Mute Off</span></div><div class="bt ba" style="left:1161.5px;top:511px;width:29px;height:24px;line-height:20.5px;font-size:14px;background:#1f6c20">A</div><div class="bt bb" style="left:1199px;top:511px;width:45.5px;height:24px;line-height:20.5px;font-size:14px;background:#6a210b"><span class="sx" style="transform:scaleX(0.85)">A>B</span></div><div class="tab" style="left:1256.5px;top:512px;width:74px;height:22px;line-height:22px;background:#7b7b6d;font-size:13.5px"><span class="sx" style="transform:scaleX(0.9)">Presets</span></div><div class="rb" style="left:1343px;top:517.5px;width:14px;height:14px;line-height:14px;"><i style="top:4px"></i><i style="top:7px;background:#5a5a5a"></i></div><div class="rb" style="left:1361px;top:517.5px;width:14px;height:14px;line-height:14px;">X</div><div class="w3s" style="left:252px;top:540px;width:73.5px;height:284.5px;line-height:284.5px;"></div><div class="cn" style="left:255px;top:542px;height:18px;line-height:18px;">CH 1</div><div class="st" style="left:289px;top:543px;height:14px;line-height:14px;">Stereo</div><div class="sb" style="left:310px;top:558.5px;width:13px;height:11.5px;line-height:11.5px;"></div><div class="kn " style="left:263px;top:569.5px;width:12px;height:12px;line-height:12px;"></div><div class="mc" style="left:288px;top:575px;"></div><div class="mc" style="left:299px;top:575px;"></div><div class="ov" style="left:309.5px;top:570px;height:10px;line-height:10px;">over</div><div class="nm nw" style="left:310.5px;top:580px;">0</div><div class="nm nw" style="left:310.5px;top:590.5px;">4</div><div class="nm nw" style="left:310.5px;top:598.5px;">6</div><div class="nm nw" style="left:310.5px;top:616px;">10</div><div class="nm nw" style="left:310.5px;top:633.5px;">20</div><div class="nm nw" style="left:310.5px;top:651.5px;">30</div><div class="nm nw" style="left:310.5px;top:663px;">40</div><div class="nm nw" style="left:310.5px;top:675.5px;">50</div><div class="nm nw" style="left:310.5px;top:687.5px;">60</div><div class="nm nw inf" style="left:310.5px;top:694.5px;">co</div><div class="ctr" style="left:253.5px;top:586px;width:31px;height:14px;line-height:14px;background:#935a5a"><span class="sx" style="transform:scaleX(0.9)">Center</span></div><div class="" style="left:254.5px;top:602px;width:28.5px;height:98px;line-height:98px;background:linear-gradient(to right,#3d1718 0,#3d1718 13%,#6c3d3d 15%,#6c3d3d 41%,#4a2222 43%,#4a2222 47%,#a87674 48%,#a87674 55%,#6c3d3d 57%,#6c3d3d 85%,#3d1718 87%,#3d1718 100%);border:1px solid #0c0c0c;border-top:3.5px solid #4a2222;border-bottom:3.5px solid #3d1718;box-shadow:0 0 0 .5px rgba(0,0,0,.5)"></div><div class="fcb" style="left:258px;top:633.5px;width:23.5px;height:16.5px;line-height:16.5px;"></div><div class="val" style="left:258px;top:705px;width:63px;height:17px;line-height:17px;background:#3454aa;font-size:12.5px"><span class="sx" style="transform:scaleX(0.88)">-12.0</span></div><div class="bt" style="left:256.5px;top:727.5px;width:29.5px;height:14.5px;line-height:11px;">S</div><div class="bt" style="left:291.5px;top:727.5px;width:30px;height:14.5px;line-height:11px;">M</div><div class="bt mix" style="left:256px;top:746.5px;width:66px;height:14.5px;line-height:11px;"><span class="sx" style="transform:scaleX(0.92)">Mix</span></div><div class="bt" style="left:256.5px;top:765.5px;width:29.5px;height:14.5px;line-height:11px;">1</div><div class="bt" style="left:291.5px;top:765.5px;width:30px;height:14.5px;line-height:11px;">2</div><div class="bt ba" style="left:255.5px;top:787px;width:30px;height:14.5px;line-height:11px;">A</div><div class="bt bb" style="left:289.5px;top:787px;width:29.5px;height:14.5px;line-height:11px;"><span class="sx" style="transform:scaleX(0.85)">A>B</span></div><div class="scr" style="left:255.5px;top:806px;width:66.5px;height:16px;line-height:13.5px;"><span class="sx" style="transform:scaleX(0.9)">Scratch</span></div><div class="w3s" style="left:327px;top:540px;width:73.5px;height:284.5px;line-height:284.5px;"></div><div class="cn" style="left:330px;top:542px;height:18px;line-height:18px;">CH 2</div><div class="st" style="left:364px;top:543px;height:14px;line-height:14px;">Stereo</div><div class="sb" style="left:385px;top:558.5px;width:13px;height:11.5px;line-height:11.5px;"></div><div class="kn " style="left:338px;top:569.5px;width:12px;height:12px;line-height:12px;"></div><div class="mc" style="left:363px;top:575px;"></div><div class="mc" style="left:374px;top:575px;"></div><div class="ov" style="left:384.5px;top:570px;height:10px;line-height:10px;">over</div><div class="nm nw" style="left:385.5px;top:580px;">0</div><div class="nm nw" style="left:385.5px;top:590.5px;">4</div><div class="nm nw" style="left:385.5px;top:598.5px;">6</div><div class="nm nw" style="left:385.5px;top:616px;">10</div><div class="nm nw" style="left:385.5px;top:633.5px;">20</div><div class="nm nw" style="left:385.5px;top:651.5px;">30</div><div class="nm nw" style="left:385.5px;top:663px;">40</div><div class="nm nw" style="left:385.5px;top:675.5px;">50</div><div class="nm nw" style="left:385.5px;top:687.5px;">60</div><div class="nm nw inf" style="left:385.5px;top:694.5px;">co</div><div class="ctr" style="left:328.5px;top:586px;width:31px;height:14px;line-height:14px;background:#935a5a"><span class="sx" style="transform:scaleX(0.9)">Center</span></div><div class="" style="left:329.5px;top:602px;width:28.5px;height:98px;line-height:98px;background:linear-gradient(to right,#3d1718 0,#3d1718 13%,#6c3d3d 15%,#6c3d3d 41%,#4a2222 43%,#4a2222 47%,#a87674 48%,#a87674 55%,#6c3d3d 57%,#6c3d3d 85%,#3d1718 87%,#3d1718 100%);border:1px solid #0c0c0c;border-top:3.5px solid #4a2222;border-bottom:3.5px solid #3d1718;box-shadow:0 0 0 .5px rgba(0,0,0,.5)"></div><div class="fcb" style="left:333px;top:633.5px;width:23.5px;height:16.5px;line-height:16.5px;"></div><div class="val" style="left:333px;top:705px;width:63px;height:17px;line-height:17px;background:#3454aa;font-size:12.5px"><span class="sx" style="transform:scaleX(0.88)">-12.0</span></div><div class="bt" style="left:331.5px;top:727.5px;width:29.5px;height:14.5px;line-height:11px;">S</div><div class="bt" style="left:366.5px;top:727.5px;width:30px;height:14.5px;line-height:11px;">M</div><div class="bt mix" style="left:331px;top:746.5px;width:66px;height:14.5px;line-height:11px;"><span class="sx" style="transform:scaleX(0.92)">Mix</span></div><div class="bt" style="left:331.5px;top:765.5px;width:29.5px;height:14.5px;line-height:11px;">1</div><div class="bt" style="left:366.5px;top:765.5px;width:30px;height:14.5px;line-height:11px;">2</div><div class="bt ba" style="left:331px;top:787px;width:30px;height:14.5px;line-height:11px;">A</div><div class="bt bb" style="left:364.5px;top:787px;width:29.5px;height:14.5px;line-height:11px;"><span class="sx" style="transform:scaleX(0.85)">A>B</span></div><div class="scr" style="left:330.5px;top:806px;width:66.5px;height:16px;line-height:13.5px;"><span class="sx" style="transform:scaleX(0.9)">Scratch</span></div><div class="w3s" style="left:402px;top:540px;width:73.5px;height:284.5px;line-height:284.5px;"></div><div class="cn" style="left:405px;top:542px;height:18px;line-height:18px;">CH 3</div><div class="st" style="left:439px;top:543px;height:14px;line-height:14px;">Stereo</div><div class="w3s" style="left:477px;top:540px;width:73.5px;height:284.5px;line-height:284.5px;"></div><div class="cn" style="left:480px;top:542px;height:18px;line-height:18px;">CH 4</div><div class="st" style="left:514px;top:543px;height:14px;line-height:14px;">Stereo</div><div class="w3s" style="left:552.5px;top:540px;width:73.5px;height:284.5px;line-height:284.5px;"></div><div class="cn" style="left:555.5px;top:542px;height:18px;line-height:18px;">CH 5</div><div class="st" style="left:589.5px;top:543px;height:14px;line-height:14px;">Stereo</div><div class="w3s" style="left:627.5px;top:540px;width:73.5px;height:284.5px;line-height:284.5px;"></div><div class="cn" style="left:630.5px;top:542px;height:18px;line-height:18px;">CH 6</div><div class="st" style="left:664.5px;top:543px;height:14px;line-height:14px;">Stereo</div><div class="w3s" style="left:702.5px;top:540px;width:73.5px;height:284.5px;line-height:284.5px;"></div><div class="cn" style="left:705.5px;top:542px;height:18px;line-height:18px;">CH 7</div><div class="st" style="left:739.5px;top:543px;height:14px;line-height:14px;">Stereo</div><div class="w3s" style="left:777.5px;top:540px;width:73.5px;height:284.5px;line-height:284.5px;"></div><div class="cn" style="left:780.5px;top:542px;height:18px;line-height:18px;">CH 8</div><div class="st" style="left:814.5px;top:543px;height:14px;line-height:14px;">Stereo</div><div class="w3b" style="left:852.5px;top:540px;width:73.5px;height:284.5px;line-height:284.5px;"></div><div class="lbl" style="left:852.5px;top:543px;width:73px;height:20px;line-height:20px;letter-spacing:2.5px;font-size:17px">Bus 1</div><div class="w3b" style="left:927.5px;top:540px;width:73.5px;height:284.5px;line-height:284.5px;"></div><div class="lbl" style="left:927.5px;top:543px;width:73px;height:20px;line-height:20px;letter-spacing:2.5px;font-size:17px">Bus 2</div><div class="w3b" style="left:1002.5px;top:540px;width:73.5px;height:284.5px;line-height:284.5px;"></div><div class="lbl" style="left:1002.5px;top:543px;width:73px;height:20px;line-height:20px;letter-spacing:2.5px;font-size:17px">Aux 1</div><div class="w3b" style="left:1078px;top:540px;width:73.5px;height:284.5px;line-height:284.5px;"></div><div class="lbl" style="left:1078px;top:543px;width:73px;height:20px;line-height:20px;letter-spacing:2.5px;font-size:17px">Aux 2</div><div class="w3b" style="left:1153px;top:540px;width:73.5px;height:284.5px;line-height:284.5px;"></div><div class="lbl" style="left:1153px;top:543px;width:73px;height:20px;line-height:20px;letter-spacing:2.5px;font-size:17px">Master</div><div class="w3b" style="left:1228px;top:540px;width:73.5px;height:284.5px;line-height:284.5px;"></div><div class="lbl" style="left:1228px;top:543px;width:73px;height:20px;line-height:20px;letter-spacing:2.5px;font-size:17px">Phones</div><div class="w3b" style="left:1303px;top:540px;width:73.5px;height:284.5px;line-height:284.5px;"></div><div class="lbl" style="left:1303px;top:543px;width:73px;height:20px;line-height:20px;letter-spacing:2.5px;font-size:17px">Record</div><div class="w4" style="left:374px;top:549px;width:1163px;height:378px;line-height:378px;"></div><div class="" style="left:374px;top:549px;width:1163px;height:1.5px;line-height:1.5px;background:linear-gradient(to bottom,#4a4a4a,#2a2a2a)"></div><div class="" style="left:1523px;top:566px;width:1px;height:347px;line-height:347px;background:#3d4650;z-index:2"></div><div class="" style="left:1515.5px;top:566px;width:12px;height:347px;line-height:347px;background:#2b333d;border-left:1px solid #14171b"></div><div class="w4i" style="left:390px;top:566px;width:1126px;height:348px;line-height:348px;"></div><div class="tab" style="left:393px;top:569px;width:74px;height:29px;line-height:29px;background:#858585;line-height:31px"><span class="sx" style="transform:scaleX(0.9)">Controls</span></div><div class="led" style="left:476.5px;top:579.5px;width:8px;height:8px;line-height:8px;"></div><div class="bd" style="left:498px;top:571.5px;height:24px;line-height:24px;font-size:16.3px;text-shadow:-1.5px 3.5px 0 rgba(124,59,44,.9)">Mix 12 a/b LP</div><div class="sk4" style="left:610px;top:570px;height:12px;line-height:12px;">Skins</div><div class="sk4" style="left:639px;top:569.5px;height:12px;line-height:12px;">1.</div><div class="ck" style="left:651px;top:570.5px;width:10px;height:10px;line-height:10px;"></div><div class="sk4" style="left:670px;top:569.5px;height:12px;line-height:12px;">2.</div><div class="ck" style="left:681.5px;top:570.5px;width:10px;height:10px;line-height:10px;"></div><div class="sk4" style="left:701px;top:569.5px;height:12px;line-height:12px;">3.</div><div class="ck" style="left:711.5px;top:570.5px;width:10px;height:10px;line-height:10px;"></div><div class="sk4 bd" style="left:611px;top:583px;height:12px;line-height:12px;">4.</div><div class="ck" style="left:622.5px;top:584px;width:10px;height:10px;line-height:10px;"></div><div class="sk4" style="left:639px;top:583px;height:12px;line-height:12px;">5.</div><div class="ck" style="left:651px;top:584px;width:10px;height:10px;line-height:10px;"></div><div class="sk4" style="left:670px;top:583px;height:12px;line-height:12px;">6.</div><div class="bd c" style="left:681.5px;top:584px;width:10px;height:10px;line-height:10px;background:#fff;color:#000;border:1px solid #222;font-size:10px;line-height:8.5px">X</div><div class="sk4" style="left:701px;top:583px;height:12px;line-height:12px;">7.</div><div class="ck" style="left:711.5px;top:584px;width:10px;height:10px;line-height:10px;"></div><div class="hbtn" style="left:730px;top:571px;width:64.5px;height:23px;line-height:20.5px;font-size:12px;line-height:22px"><span class="sx" style="transform:scaleX(0.93)">Solo Off</span></div><div class="hbtn" style="left:801px;top:571px;width:64.5px;height:23px;line-height:20.5px;font-size:12px;line-height:22px"><span class="sx" style="transform:scaleX(0.93)">Mute Off</span></div><div class="bd" style="left:874px;top:581px;height:14px;line-height:14px;font-size:12.5px;text-shadow:1px 1px 1px #000"><span class="sxl" style="transform:scaleX(0.892)">Ch/Bus/Aux Selection:</span></div><div class="dd" style="left:997px;top:581px;width:52.5px;height:14px;line-height:14px;"><span class="sxl" style="transform:scaleX(0.9)">Channel</span></div><div class="arr" style="left:1054.5px;top:582px;width:12px;height:12px;line-height:12px;"></div><div class="dd" style="left:1072px;top:581px;width:52.5px;height:14px;line-height:14px;"><span class="sxl" style="transform:scaleX(0.9)">Channel</span></div><div class="arr" style="left:1129.5px;top:582px;width:12px;height:12px;line-height:12px;"></div><div class="dd" style="left:1146px;top:581px;width:52.5px;height:14px;line-height:14px;"><span class="sxl" style="transform:scaleX(0.9)">Channel</span></div><div class="arr" style="left:1203px;top:582px;width:12px;height:12px;line-height:12px;"></div><div class="dd" style="left:1220.5px;top:581px;width:52.5px;height:14px;line-height:14px;"><span class="sxl" style="transform:scaleX(0.9)">Channel</span></div><div class="arr" style="left:1278px;top:582px;width:12px;height:12px;line-height:12px;"></div><div class="bt ba" style="left:1299px;top:573px;width:38px;height:21.5px;line-height:18px;font-size:14px;background:#1f6c20">A</div><div class="bt bb" style="left:1342.5px;top:573px;width:54.5px;height:21.5px;line-height:18px;font-size:14px;background:#6a210b"><span class="sx" style="transform:scaleX(0.85)">A>B</span></div><div class="tab" style="left:1402px;top:572px;width:73.5px;height:21.5px;line-height:21.5px;background:#9b9b9b;font-size:13.5px"><span class="sx" style="transform:scaleX(0.9)">Presets</span></div><div class="rb" style="left:1479px;top:575px;width:14px;height:14px;line-height:14px;"><i style="top:4px"></i><i style="top:7px;background:#5a5a5a"></i></div><div class="rb" style="left:1497px;top:575px;width:14px;height:14px;line-height:14px;">X</div><div class="w4s" style="left:392px;top:599px;width:74.5px;height:311px;line-height:311px;"></div><div class="cn" style="left:396.5px;top:599px;height:18px;line-height:18px;">CH 1</div><div class="st" style="left:431px;top:601px;height:14px;line-height:14px;">Stereo</div><div class="sb4" style="left:450.5px;top:619.5px;width:12.5px;height:12.5px;line-height:12.5px;"></div><div class="kn " style="left:405.5px;top:631.5px;width:12px;height:12px;line-height:12px;"></div><div class="mc" style="left:430px;top:640px;"></div><div class="mc" style="left:439px;top:640px;"></div><div class="ov" style="left:449px;top:635px;height:10px;line-height:10px;">over</div><div class="nm nw" style="left:448px;top:645px;">0</div><div class="nm nw" style="left:448px;top:655.5px;">4</div><div class="nm nw" style="left:448px;top:663.5px;">6</div><div class="nm nw" style="left:448px;top:681px;">10</div><div class="nm nw" style="left:448px;top:698.5px;">20</div><div class="nm nw" style="left:448px;top:716.5px;">30</div><div class="nm nw" style="left:448px;top:728px;">40</div><div class="nm nw" style="left:448px;top:740.5px;">50</div><div class="nm nw" style="left:448px;top:752.5px;">60</div><div class="nm nw inf" style="left:448px;top:759.5px;">co</div><div class="ctr" style="left:395.5px;top:649px;width:30.5px;height:14px;line-height:14px;background:#869faa"><span class="sx" style="transform:scaleX(0.9)">Center</span></div><div class="" style="left:397px;top:666px;width:28px;height:98px;line-height:98px;background:linear-gradient(to right,#4c606a 0,#4c606a 13%,#6a848f 15%,#6a848f 41%,#506670 43%,#506670 47%,#a8c0ca 48%,#a8c0ca 55%,#6a848f 57%,#6a848f 85%,#4c606a 87%,#4c606a 100%);border:1px solid #0c0c0c;border-top:3.5px solid #506670;border-bottom:3.5px solid #4c606a;box-shadow:0 0 0 .5px rgba(0,0,0,.5)"></div><div class="fcb" style="left:400px;top:697px;width:23.5px;height:17.5px;line-height:17.5px;"></div><div class="val" style="left:396.5px;top:769.5px;width:65px;height:16.5px;line-height:16.5px;background:#3b8fe4;font-size:12.5px"><span class="sx" style="transform:scaleX(0.88)">-12.0</span></div><div class="bt" style="left:396.5px;top:790.5px;width:28px;height:15px;line-height:11.5px;">S</div><div class="bt" style="left:434px;top:790.5px;width:28px;height:15px;line-height:11.5px;">M</div><div class="bt mix" style="left:396.5px;top:809.5px;width:66.5px;height:14.5px;line-height:11px;"><span class="sx" style="transform:scaleX(0.92)">Mix</span></div><div class="bt" style="left:396.5px;top:828px;width:28px;height:15px;line-height:11.5px;">1</div><div class="bt" style="left:434px;top:828px;width:28px;height:15px;line-height:11.5px;">2</div><div class="bt" style="left:396.5px;top:847px;width:28px;height:15px;line-height:11.5px;">3</div><div class="bt" style="left:434px;top:847px;width:28px;height:15px;line-height:11.5px;">4</div><div class="bt ba" style="left:396.5px;top:866px;width:28px;height:15px;line-height:11.5px;">A</div><div class="bt bb" style="left:434px;top:866px;width:28px;height:15px;line-height:11.5px;"><span class="sx" style="transform:scaleX(0.85)">A>B</span></div><div class="scr" style="left:396.5px;top:884.5px;width:64px;height:18px;line-height:15.5px;"><span class="sx" style="transform:scaleX(0.9)">Scratch</span></div><div class="w4s" style="left:467px;top:599px;width:74.5px;height:311px;line-height:311px;"></div><div class="cn" style="left:471.5px;top:599px;height:18px;line-height:18px;">CH 2</div><div class="st" style="left:506px;top:601px;height:14px;line-height:14px;">Stereo</div><div class="sb4" style="left:525.5px;top:618.5px;width:12.5px;height:12.5px;line-height:12.5px;"></div><div class="kn " style="left:480.5px;top:630.5px;width:12px;height:12px;line-height:12px;"></div><div class="mc" style="left:505px;top:640px;"></div><div class="mc" style="left:514px;top:640px;"></div><div class="ov" style="left:524px;top:635px;height:10px;line-height:10px;">over</div><div class="nm nw" style="left:523px;top:645px;">0</div><div class="nm nw" style="left:523px;top:655.5px;">4</div><div class="nm nw" style="left:523px;top:663.5px;">6</div><div class="nm nw" style="left:523px;top:681px;">10</div><div class="nm nw" style="left:523px;top:698.5px;">20</div><div class="nm nw" style="left:523px;top:716.5px;">30</div><div class="nm nw" style="left:523px;top:728px;">40</div><div class="nm nw" style="left:523px;top:740.5px;">50</div><div class="nm nw" style="left:523px;top:752.5px;">60</div><div class="nm nw inf" style="left:523px;top:759.5px;">co</div><div class="ctr" style="left:470.5px;top:648px;width:30.5px;height:14px;line-height:14px;background:#869faa"><span class="sx" style="transform:scaleX(0.9)">Center</span></div><div class="" style="left:472px;top:665px;width:28px;height:98px;line-height:98px;background:linear-gradient(to right,#4c606a 0,#4c606a 13%,#6a848f 15%,#6a848f 41%,#506670 43%,#506670 47%,#a8c0ca 48%,#a8c0ca 55%,#6a848f 57%,#6a848f 85%,#4c606a 87%,#4c606a 100%);border:1px solid #0c0c0c;border-top:3.5px solid #506670;border-bottom:3.5px solid #4c606a;box-shadow:0 0 0 .5px rgba(0,0,0,.5)"></div><div class="fcb" style="left:475px;top:696px;width:23.5px;height:17.5px;line-height:17.5px;"></div><div class="val" style="left:471.5px;top:768.5px;width:65px;height:16.5px;line-height:16.5px;background:#3b8fe4;font-size:12.5px"><span class="sx" style="transform:scaleX(0.88)">-12.0</span></div><div class="bt" style="left:471.5px;top:789.5px;width:28px;height:15px;line-height:11.5px;">S</div><div class="bt" style="left:509px;top:789.5px;width:28px;height:15px;line-height:11.5px;">M</div><div class="bt mix" style="left:471.5px;top:808.5px;width:66.5px;height:14.5px;line-height:11px;"><span class="sx" style="transform:scaleX(0.92)">Mix</span></div><div class="bt" style="left:471.5px;top:827px;width:28px;height:15px;line-height:11.5px;">1</div><div class="bt" style="left:509px;top:827px;width:28px;height:15px;line-height:11.5px;">2</div><div class="bt" style="left:471.5px;top:846px;width:28px;height:15px;line-height:11.5px;">3</div><div class="bt" style="left:509px;top:846px;width:28px;height:15px;line-height:11.5px;">4</div><div class="bt ba" style="left:471.5px;top:865px;width:28px;height:15px;line-height:11.5px;">A</div><div class="bt bb" style="left:509px;top:865px;width:28px;height:15px;line-height:11.5px;"><span class="sx" style="transform:scaleX(0.85)">A>B</span></div><div class="scr" style="left:471.5px;top:883.5px;width:64px;height:18px;line-height:15.5px;"><span class="sx" style="transform:scaleX(0.9)">Stratch</span></div><div class="w4s" style="left:542px;top:599px;width:74.5px;height:311px;line-height:311px;"></div><div class="cn" style="left:546.5px;top:599px;height:18px;line-height:18px;">CH 3</div><div class="st" style="left:581px;top:601px;height:14px;line-height:14px;">Stereo</div><div class="sb4" style="left:600.5px;top:618.5px;width:12.5px;height:12.5px;line-height:12.5px;"></div><div class="kn " style="left:555.5px;top:630.5px;width:12px;height:12px;line-height:12px;"></div><div class="mc" style="left:580px;top:640px;"></div><div class="mc" style="left:589px;top:640px;"></div><div class="ov" style="left:599px;top:635px;height:10px;line-height:10px;">over</div><div class="nm nw" style="left:598px;top:645px;">0</div><div class="nm nw" style="left:598px;top:655.5px;">4</div><div class="nm nw" style="left:598px;top:663.5px;">6</div><div class="nm nw" style="left:598px;top:681px;">10</div><div class="nm nw" style="left:598px;top:698.5px;">20</div><div class="nm nw" style="left:598px;top:716.5px;">30</div><div class="nm nw" style="left:598px;top:728px;">40</div><div class="nm nw" style="left:598px;top:740.5px;">50</div><div class="nm nw" style="left:598px;top:752.5px;">60</div><div class="nm nw inf" style="left:598px;top:759.5px;">co</div><div class="ctr" style="left:545.5px;top:648px;width:30.5px;height:14px;line-height:14px;background:#869faa"><span class="sx" style="transform:scaleX(0.9)">Center</span></div><div class="" style="left:547px;top:665px;width:28px;height:98px;line-height:98px;background:linear-gradient(to right,#4c606a 0,#4c606a 13%,#6a848f 15%,#6a848f 41%,#506670 43%,#506670 47%,#a8c0ca 48%,#a8c0ca 55%,#6a848f 57%,#6a848f 85%,#4c606a 87%,#4c606a 100%);border:1px solid #0c0c0c;border-top:3.5px solid #506670;border-bottom:3.5px solid #4c606a;box-shadow:0 0 0 .5px rgba(0,0,0,.5)"></div><div class="fcb" style="left:550px;top:696px;width:23.5px;height:17.5px;line-height:17.5px;"></div><div class="val" style="left:546.5px;top:768.5px;width:65px;height:16.5px;line-height:16.5px;background:#3b8fe4;font-size:12.5px"><span class="sx" style="transform:scaleX(0.88)">-12.0</span></div><div class="bt" style="left:546.5px;top:789.5px;width:28px;height:15px;line-height:11.5px;">S</div><div class="bt" style="left:584px;top:789.5px;width:28px;height:15px;line-height:11.5px;">M</div><div class="bt mix" style="left:546.5px;top:808.5px;width:66.5px;height:14.5px;line-height:11px;"><span class="sx" style="transform:scaleX(0.92)">Mix</span></div><div class="bt" style="left:546.5px;top:827px;width:28px;height:15px;line-height:11.5px;">1</div><div class="bt" style="left:584px;top:827px;width:28px;height:15px;line-height:11.5px;">2</div><div class="bt" style="left:546.5px;top:846px;width:28px;height:15px;line-height:11.5px;">3</div><div class="bt" style="left:584px;top:846px;width:28px;height:15px;line-height:11.5px;">4</div><div class="bt ba" style="left:546.5px;top:865px;width:28px;height:15px;line-height:11.5px;">A</div><div class="bt bb" style="left:584px;top:865px;width:28px;height:15px;line-height:11.5px;"><span class="sx" style="transform:scaleX(0.85)">A>B</span></div><div class="scr" style="left:546.5px;top:883.5px;width:64px;height:18px;line-height:15.5px;"><span class="sx" style="transform:scaleX(0.9)">Scratch</span></div><div class="w4s" style="left:617px;top:599px;width:74.5px;height:311px;line-height:311px;"></div><div class="cn" style="left:621.5px;top:599px;height:18px;line-height:18px;">CH 4</div><div class="st" style="left:656px;top:601px;height:14px;line-height:14px;">Stereo</div><div class="sb4" style="left:675.5px;top:619.5px;width:12.5px;height:12.5px;line-height:12.5px;"></div><div class="kn " style="left:630.5px;top:631.5px;width:12px;height:12px;line-height:12px;"></div><div class="mc" style="left:655px;top:640px;"></div><div class="mc" style="left:664px;top:640px;"></div><div class="ov" style="left:674px;top:635px;height:10px;line-height:10px;">over</div><div class="nm nw" style="left:673px;top:645px;">0</div><div class="nm nw" style="left:673px;top:655.5px;">4</div><div class="nm nw" style="left:673px;top:663.5px;">6</div><div class="nm nw" style="left:673px;top:681px;">10</div><div class="nm nw" style="left:673px;top:698.5px;">20</div><div class="nm nw" style="left:673px;top:716.5px;">30</div><div class="nm nw" style="left:673px;top:728px;">40</div><div class="nm nw" style="left:673px;top:740.5px;">50</div><div class="nm nw" style="left:673px;top:752.5px;">60</div><div class="nm nw inf" style="left:673px;top:759.5px;">co</div><div class="ctr" style="left:620.5px;top:649px;width:30.5px;height:14px;line-height:14px;background:#869faa"><span class="sx" style="transform:scaleX(0.9)">Center</span></div><div class="" style="left:622px;top:666px;width:28px;height:98px;line-height:98px;background:linear-gradient(to right,#4c606a 0,#4c606a 13%,#6a848f 15%,#6a848f 41%,#506670 43%,#506670 47%,#a8c0ca 48%,#a8c0ca 55%,#6a848f 57%,#6a848f 85%,#4c606a 87%,#4c606a 100%);border:1px solid #0c0c0c;border-top:3.5px solid #506670;border-bottom:3.5px solid #4c606a;box-shadow:0 0 0 .5px rgba(0,0,0,.5)"></div><div class="fcb" style="left:625px;top:697px;width:23.5px;height:17.5px;line-height:17.5px;"></div><div class="val" style="left:621.5px;top:769.5px;width:65px;height:16.5px;line-height:16.5px;background:#3b8fe4;font-size:12.5px"><span class="sx" style="transform:scaleX(0.88)">-12.0</span></div><div class="bt" style="left:621.5px;top:790.5px;width:28px;height:15px;line-height:11.5px;">S</div><div class="bt" style="left:659px;top:790.5px;width:28px;height:15px;line-height:11.5px;">M</div><div class="bt mix" style="left:621.5px;top:809.5px;width:66.5px;height:14.5px;line-height:11px;"><span class="sx" style="transform:scaleX(0.92)">Mix</span></div><div class="bt" style="left:621.5px;top:828px;width:28px;height:15px;line-height:11.5px;">1</div><div class="bt" style="left:659px;top:828px;width:28px;height:15px;line-height:11.5px;">2</div><div class="bt" style="left:621.5px;top:847px;width:28px;height:15px;line-height:11.5px;">3</div><div class="bt" style="left:659px;top:847px;width:28px;height:15px;line-height:11.5px;">4</div><div class="bt ba" style="left:621.5px;top:866px;width:28px;height:15px;line-height:11.5px;">A</div><div class="bt bb" style="left:659px;top:866px;width:28px;height:15px;line-height:11.5px;"><span class="sx" style="transform:scaleX(0.85)">A>B</span></div><div class="scr" style="left:621.5px;top:884.5px;width:64px;height:18px;line-height:15.5px;"><span class="sx" style="transform:scaleX(0.9)">Scratch</span></div><div class="w4s" style="left:692px;top:599px;width:74.5px;height:311px;line-height:311px;"></div><div class="cn" style="left:696.5px;top:599px;height:18px;line-height:18px;">CH 5</div><div class="st" style="left:731px;top:601px;height:14px;line-height:14px;">Stereo</div><div class="sb4" style="left:750.5px;top:619.5px;width:12.5px;height:12.5px;line-height:12.5px;"></div><div class="kn " style="left:705.5px;top:631.5px;width:12px;height:12px;line-height:12px;"></div><div class="mc" style="left:730px;top:640px;"></div><div class="mc" style="left:739px;top:640px;"></div><div class="ov" style="left:749px;top:635px;height:10px;line-height:10px;">over</div><div class="nm nw" style="left:748px;top:645px;">0</div><div class="nm nw" style="left:748px;top:655.5px;">4</div><div class="nm nw" style="left:748px;top:663.5px;">6</div><div class="nm nw" style="left:748px;top:681px;">10</div><div class="nm nw" style="left:748px;top:698.5px;">20</div><div class="nm nw" style="left:748px;top:716.5px;">30</div><div class="nm nw" style="left:748px;top:728px;">40</div><div class="nm nw" style="left:748px;top:740.5px;">50</div><div class="nm nw" style="left:748px;top:752.5px;">60</div><div class="nm nw inf" style="left:748px;top:759.5px;">co</div><div class="ctr" style="left:695.5px;top:649px;width:30.5px;height:14px;line-height:14px;background:#869faa"><span class="sx" style="transform:scaleX(0.9)">Center</span></div><div class="" style="left:697px;top:666px;width:28px;height:98px;line-height:98px;background:linear-gradient(to right,#4c606a 0,#4c606a 13%,#6a848f 15%,#6a848f 41%,#506670 43%,#506670 47%,#a8c0ca 48%,#a8c0ca 55%,#6a848f 57%,#6a848f 85%,#4c606a 87%,#4c606a 100%);border:1px solid #0c0c0c;border-top:3.5px solid #506670;border-bottom:3.5px solid #4c606a;box-shadow:0 0 0 .5px rgba(0,0,0,.5)"></div><div class="fcb" style="left:700px;top:697px;width:23.5px;height:17.5px;line-height:17.5px;"></div><div class="val" style="left:696.5px;top:769.5px;width:65px;height:16.5px;line-height:16.5px;background:#3b8fe4;font-size:12.5px"><span class="sx" style="transform:scaleX(0.88)">-12.0</span></div><div class="bt" style="left:696.5px;top:790.5px;width:28px;height:15px;line-height:11.5px;">S</div><div class="bt" style="left:734px;top:790.5px;width:28px;height:15px;line-height:11.5px;">M</div><div class="bt mix" style="left:696.5px;top:809.5px;width:66.5px;height:14.5px;line-height:11px;"><span class="sx" style="transform:scaleX(0.92)">Mix</span></div><div class="bt" style="left:696.5px;top:828px;width:28px;height:15px;line-height:11.5px;">1</div><div class="bt" style="left:734px;top:828px;width:28px;height:15px;line-height:11.5px;">2</div><div class="bt" style="left:696.5px;top:847px;width:28px;height:15px;line-height:11.5px;">3</div><div class="bt" style="left:734px;top:847px;width:28px;height:15px;line-height:11.5px;">4</div><div class="bt ba" style="left:696.5px;top:866px;width:28px;height:15px;line-height:11.5px;">A</div><div class="bt bb" style="left:734px;top:866px;width:28px;height:15px;line-height:11.5px;"><span class="sx" style="transform:scaleX(0.85)">A>B</span></div><div class="scr" style="left:696.5px;top:884.5px;width:64px;height:18px;line-height:15.5px;"><span class="sx" style="transform:scaleX(0.9)">Scratch</span></div><div class="w4s" style="left:767px;top:599px;width:74.5px;height:311px;line-height:311px;"></div><div class="cn" style="left:771px;top:599px;height:18px;line-height:18px;">CH 6</div><div class="st" style="left:806px;top:601px;height:14px;line-height:14px;">Stereo</div><div class="sb4" style="left:825px;top:619.5px;width:12.5px;height:12.5px;line-height:12.5px;"></div><div class="kn " style="left:780px;top:631.5px;width:12px;height:12px;line-height:12px;"></div><div class="mc" style="left:805px;top:640px;"></div><div class="mc" style="left:814px;top:640px;"></div><div class="ov" style="left:824px;top:635px;height:10px;line-height:10px;">over</div><div class="nm nw" style="left:823px;top:645px;">0</div><div class="nm nw" style="left:823px;top:655.5px;">4</div><div class="nm nw" style="left:823px;top:663.5px;">6</div><div class="nm nw" style="left:823px;top:681px;">10</div><div class="nm nw" style="left:823px;top:698.5px;">20</div><div class="nm nw" style="left:823px;top:716.5px;">30</div><div class="nm nw" style="left:823px;top:728px;">40</div><div class="nm nw" style="left:823px;top:740.5px;">50</div><div class="nm nw" style="left:823px;top:752.5px;">60</div><div class="nm nw inf" style="left:823px;top:759.5px;">co</div><div class="ctr" style="left:770px;top:649px;width:30.5px;height:14px;line-height:14px;background:#869faa"><span class="sx" style="transform:scaleX(0.9)">Center</span></div><div class="" style="left:772px;top:666px;width:28px;height:98px;line-height:98px;background:linear-gradient(to right,#4c606a 0,#4c606a 13%,#6a848f 15%,#6a848f 41%,#506670 43%,#506670 47%,#a8c0ca 48%,#a8c0ca 55%,#6a848f 57%,#6a848f 85%,#4c606a 87%,#4c606a 100%);border:1px solid #0c0c0c;border-top:3.5px solid #506670;border-bottom:3.5px solid #4c606a;box-shadow:0 0 0 .5px rgba(0,0,0,.5)"></div><div class="fcb" style="left:775px;top:697px;width:23.5px;height:17.5px;line-height:17.5px;"></div><div class="val" style="left:771px;top:769.5px;width:65px;height:16.5px;line-height:16.5px;background:#3b8fe4;font-size:12.5px"><span class="sx" style="transform:scaleX(0.88)">-12.0</span></div><div class="bt" style="left:771px;top:790.5px;width:28px;height:15px;line-height:11.5px;">S</div><div class="bt" style="left:809px;top:790.5px;width:28px;height:15px;line-height:11.5px;">M</div><div class="bt mix" style="left:771px;top:809.5px;width:66.5px;height:14.5px;line-height:11px;"><span class="sx" style="transform:scaleX(0.92)">Mix</span></div><div class="bt" style="left:771px;top:828px;width:28px;height:15px;line-height:11.5px;">1</div><div class="bt" style="left:809px;top:828px;width:28px;height:15px;line-height:11.5px;">2</div><div class="bt" style="left:771px;top:847px;width:28px;height:15px;line-height:11.5px;">3</div><div class="bt" style="left:809px;top:847px;width:28px;height:15px;line-height:11.5px;">4</div><div class="bt ba" style="left:771px;top:866px;width:28px;height:15px;line-height:11.5px;">A</div><div class="bt bb" style="left:809px;top:866px;width:28px;height:15px;line-height:11.5px;"><span class="sx" style="transform:scaleX(0.85)">A>B</span></div><div class="scr" style="left:771px;top:884.5px;width:64px;height:18px;line-height:15.5px;"><span class="sx" style="transform:scaleX(0.9)">Scratch</span></div><div class="w4s" style="left:841.5px;top:599px;width:74.5px;height:311px;line-height:311px;"></div><div class="cn" style="left:846px;top:599px;height:18px;line-height:18px;">CH 7</div><div class="st" style="left:880.5px;top:601px;height:14px;line-height:14px;">Stereo</div><div class="sb4" style="left:900px;top:618.5px;width:12.5px;height:12.5px;line-height:12.5px;"></div><div class="kn " style="left:855px;top:630.5px;width:12px;height:12px;line-height:12px;"></div><div class="mc" style="left:880px;top:640px;"></div><div class="mc" style="left:889px;top:640px;"></div><div class="ov" style="left:899px;top:635px;height:10px;line-height:10px;">over</div><div class="nm nw" style="left:898px;top:645px;">0</div><div class="nm nw" style="left:898px;top:655.5px;">4</div><div class="nm nw" style="left:898px;top:663.5px;">6</div><div class="nm nw" style="left:898px;top:681px;">10</div><div class="nm nw" style="left:898px;top:698.5px;">20</div><div class="nm nw" style="left:898px;top:716.5px;">30</div><div class="nm nw" style="left:898px;top:728px;">40</div><div class="nm nw" style="left:898px;top:740.5px;">50</div><div class="nm nw" style="left:898px;top:752.5px;">60</div><div class="nm nw inf" style="left:898px;top:759.5px;">co</div><div class="ctr" style="left:845px;top:648px;width:30.5px;height:14px;line-height:14px;background:#869faa"><span class="sx" style="transform:scaleX(0.9)">Center</span></div><div class="" style="left:846.5px;top:665px;width:28px;height:98px;line-height:98px;background:linear-gradient(to right,#4c606a 0,#4c606a 13%,#6a848f 15%,#6a848f 41%,#506670 43%,#506670 47%,#a8c0ca 48%,#a8c0ca 55%,#6a848f 57%,#6a848f 85%,#4c606a 87%,#4c606a 100%);border:1px solid #0c0c0c;border-top:3.5px solid #506670;border-bottom:3.5px solid #4c606a;box-shadow:0 0 0 .5px rgba(0,0,0,.5)"></div><div class="fcb" style="left:849.5px;top:696px;width:23.5px;height:17.5px;line-height:17.5px;"></div><div class="val" style="left:846px;top:768.5px;width:65px;height:16.5px;line-height:16.5px;background:#3b8fe4;font-size:12.5px"><span class="sx" style="transform:scaleX(0.88)">-12.0</span></div><div class="bt" style="left:846px;top:789.5px;width:28px;height:15px;line-height:11.5px;">S</div><div class="bt" style="left:883.5px;top:789.5px;width:28px;height:15px;line-height:11.5px;">M</div><div class="bt mix" style="left:846px;top:808.5px;width:66.5px;height:14.5px;line-height:11px;"><span class="sx" style="transform:scaleX(0.92)">Mix</span></div><div class="bt" style="left:846px;top:827px;width:28px;height:15px;line-height:11.5px;">1</div><div class="bt" style="left:883.5px;top:827px;width:28px;height:15px;line-height:11.5px;">2</div><div class="bt" style="left:846px;top:846px;width:28px;height:15px;line-height:11.5px;">3</div><div class="bt" style="left:883.5px;top:846px;width:28px;height:15px;line-height:11.5px;">4</div><div class="bt ba" style="left:846px;top:865px;width:28px;height:15px;line-height:11.5px;">A</div><div class="bt bb" style="left:883.5px;top:865px;width:28px;height:15px;line-height:11.5px;"><span class="sx" style="transform:scaleX(0.85)">A>B</span></div><div class="scr" style="left:846px;top:883.5px;width:64px;height:18px;line-height:15.5px;"><span class="sx" style="transform:scaleX(0.9)">Scratch</span></div><div class="w4s" style="left:916.5px;top:599px;width:74.5px;height:311px;line-height:311px;"></div><div class="cn" style="left:921px;top:599px;height:18px;line-height:18px;">CH 8</div><div class="st" style="left:955.5px;top:601px;height:14px;line-height:14px;">Stereo</div><div class="sb4" style="left:975px;top:618.5px;width:12.5px;height:12.5px;line-height:12.5px;"></div><div class="kn " style="left:930px;top:630.5px;width:12px;height:12px;line-height:12px;"></div><div class="mc" style="left:955px;top:640px;"></div><div class="mc" style="left:964px;top:640px;"></div><div class="ov" style="left:974px;top:635px;height:10px;line-height:10px;">over</div><div class="nm nw" style="left:973px;top:645px;">0</div><div class="nm nw" style="left:973px;top:655.5px;">4</div><div class="nm nw" style="left:973px;top:663.5px;">6</div><div class="nm nw" style="left:973px;top:681px;">10</div><div class="nm nw" style="left:973px;top:698.5px;">20</div><div class="nm nw" style="left:973px;top:716.5px;">30</div><div class="nm nw" style="left:973px;top:728px;">40</div><div class="nm nw" style="left:973px;top:740.5px;">50</div><div class="nm nw" style="left:973px;top:752.5px;">60</div><div class="nm nw inf" style="left:973px;top:759.5px;">co</div><div class="ctr" style="left:920px;top:648px;width:30.5px;height:14px;line-height:14px;background:#869faa"><span class="sx" style="transform:scaleX(0.9)">Center</span></div><div class="" style="left:921.5px;top:665px;width:28px;height:98px;line-height:98px;background:linear-gradient(to right,#4c606a 0,#4c606a 13%,#6a848f 15%,#6a848f 41%,#506670 43%,#506670 47%,#a8c0ca 48%,#a8c0ca 55%,#6a848f 57%,#6a848f 85%,#4c606a 87%,#4c606a 100%);border:1px solid #0c0c0c;border-top:3.5px solid #506670;border-bottom:3.5px solid #4c606a;box-shadow:0 0 0 .5px rgba(0,0,0,.5)"></div><div class="fcb" style="left:924.5px;top:696px;width:23.5px;height:17.5px;line-height:17.5px;"></div><div class="val" style="left:921px;top:768.5px;width:65px;height:16.5px;line-height:16.5px;background:#3b8fe4;font-size:12.5px"><span class="sx" style="transform:scaleX(0.88)">-12.0</span></div><div class="bt" style="left:921px;top:789.5px;width:28px;height:15px;line-height:11.5px;">S</div><div class="bt" style="left:958.5px;top:789.5px;width:28px;height:15px;line-height:11.5px;">M</div><div class="bt mix" style="left:921px;top:808.5px;width:66.5px;height:14.5px;line-height:11px;"><span class="sx" style="transform:scaleX(0.92)">Mix</span></div><div class="bt" style="left:921px;top:827px;width:28px;height:15px;line-height:11.5px;">1</div><div class="bt" style="left:958.5px;top:827px;width:28px;height:15px;line-height:11.5px;">2</div><div class="bt" style="left:921px;top:846px;width:28px;height:15px;line-height:11.5px;">3</div><div class="bt" style="left:958.5px;top:846px;width:28px;height:15px;line-height:11.5px;">4</div><div class="bt ba" style="left:921px;top:865px;width:28px;height:15px;line-height:11.5px;">A</div><div class="bt bb" style="left:958.5px;top:865px;width:28px;height:15px;line-height:11.5px;"><span class="sx" style="transform:scaleX(0.85)">A>B</span></div><div class="scr" style="left:921px;top:883.5px;width:64px;height:18px;line-height:15.5px;"><span class="sx" style="transform:scaleX(0.9)">Scratch</span></div><div class="w4s" style="left:991.5px;top:599px;width:74.5px;height:311px;line-height:311px;"></div><div class="cn" style="left:996px;top:599px;height:18px;line-height:18px;">CH 9</div><div class="st" style="left:1030.5px;top:601px;height:14px;line-height:14px;">Stereo</div><div class="sb4" style="left:1050px;top:618.5px;width:12.5px;height:12.5px;line-height:12.5px;"></div><div class="kn " style="left:1005px;top:630.5px;width:12px;height:12px;line-height:12px;"></div><div class="mc" style="left:1030px;top:640px;"></div><div class="mc" style="left:1039px;top:640px;"></div><div class="ov" style="left:1049px;top:635px;height:10px;line-height:10px;">over</div><div class="nm nw" style="left:1048px;top:645px;">0</div><div class="nm nw" style="left:1048px;top:655.5px;">4</div><div class="nm nw" style="left:1048px;top:663.5px;">6</div><div class="nm nw" style="left:1048px;top:681px;">10</div><div class="nm nw" style="left:1048px;top:698.5px;">20</div><div class="nm nw" style="left:1048px;top:716.5px;">30</div><div class="nm nw" style="left:1048px;top:728px;">40</div><div class="nm nw" style="left:1048px;top:740.5px;">50</div><div class="nm nw" style="left:1048px;top:752.5px;">60</div><div class="nm nw inf" style="left:1048px;top:759.5px;">co</div><div class="ctr" style="left:995px;top:648px;width:30.5px;height:14px;line-height:14px;background:#869faa"><span class="sx" style="transform:scaleX(0.9)">Center</span></div><div class="" style="left:996.5px;top:665px;width:28px;height:98px;line-height:98px;background:linear-gradient(to right,#4c606a 0,#4c606a 13%,#6a848f 15%,#6a848f 41%,#506670 43%,#506670 47%,#a8c0ca 48%,#a8c0ca 55%,#6a848f 57%,#6a848f 85%,#4c606a 87%,#4c606a 100%);border:1px solid #0c0c0c;border-top:3.5px solid #506670;border-bottom:3.5px solid #4c606a;box-shadow:0 0 0 .5px rgba(0,0,0,.5)"></div><div class="fcb" style="left:999.5px;top:696px;width:23.5px;height:17.5px;line-height:17.5px;"></div><div class="val" style="left:996px;top:768.5px;width:65px;height:16.5px;line-height:16.5px;background:#3b8fe4;font-size:12.5px"><span class="sx" style="transform:scaleX(0.88)">-12.0</span></div><div class="bt" style="left:996px;top:789.5px;width:28px;height:15px;line-height:11.5px;">S</div><div class="bt" style="left:1033.5px;top:789.5px;width:28px;height:15px;line-height:11.5px;">M</div><div class="bt mix" style="left:996px;top:808.5px;width:66.5px;height:14.5px;line-height:11px;"><span class="sx" style="transform:scaleX(0.92)">Mix</span></div><div class="bt dis" style="left:996px;top:827px;width:28px;height:15px;line-height:11.5px;">1</div><div class="bt" style="left:1033.5px;top:827px;width:28px;height:15px;line-height:11.5px;">2</div><div class="bt" style="left:996px;top:846px;width:28px;height:15px;line-height:11.5px;">3</div><div class="bt" style="left:1033.5px;top:846px;width:28px;height:15px;line-height:11.5px;">4</div><div class="bt ba" style="left:996px;top:865px;width:28px;height:15px;line-height:11.5px;">A</div><div class="bt bb" style="left:1033.5px;top:865px;width:28px;height:15px;line-height:11.5px;"><span class="sx" style="transform:scaleX(0.85)">A>B</span></div><div class="scr" style="left:996px;top:883.5px;width:64px;height:18px;line-height:15.5px;"><span class="sx" style="transform:scaleX(0.9)">Scratch</span></div><div class="w4s" style="left:1066.5px;top:599px;width:74.5px;height:311px;line-height:311px;"></div><div class="cn" style="left:1071px;top:599px;height:18px;line-height:18px;transform:scaleX(.72)">CH 10</div><div class="st" style="left:1105.5px;top:601px;height:14px;line-height:14px;">Stereo</div><div class="sb4" style="left:1125px;top:618.5px;width:12.5px;height:12.5px;line-height:12.5px;"></div><div class="kn " style="left:1080px;top:630.5px;width:12px;height:12px;line-height:12px;"></div><div class="mc" style="left:1105px;top:640px;"></div><div class="mc" style="left:1114px;top:640px;"></div><div class="ov" style="left:1124px;top:635px;height:10px;line-height:10px;">over</div><div class="nm nw" style="left:1123px;top:645px;">0</div><div class="nm nw" style="left:1123px;top:655.5px;">4</div><div class="nm nw" style="left:1123px;top:663.5px;">6</div><div class="nm nw" style="left:1123px;top:681px;">10</div><div class="nm nw" style="left:1123px;top:698.5px;">20</div><div class="nm nw" style="left:1123px;top:716.5px;">30</div><div class="nm nw" style="left:1123px;top:728px;">40</div><div class="nm nw" style="left:1123px;top:740.5px;">50</div><div class="nm nw" style="left:1123px;top:752.5px;">60</div><div class="nm nw inf" style="left:1123px;top:759.5px;">co</div><div class="ctr" style="left:1070px;top:648px;width:30.5px;height:14px;line-height:14px;background:#869faa"><span class="sx" style="transform:scaleX(0.9)">Center</span></div><div class="" style="left:1071.5px;top:665px;width:28px;height:98px;line-height:98px;background:linear-gradient(to right,#4c606a 0,#4c606a 13%,#6a848f 15%,#6a848f 41%,#506670 43%,#506670 47%,#a8c0ca 48%,#a8c0ca 55%,#6a848f 57%,#6a848f 85%,#4c606a 87%,#4c606a 100%);border:1px solid #0c0c0c;border-top:3.5px solid #506670;border-bottom:3.5px solid #4c606a;box-shadow:0 0 0 .5px rgba(0,0,0,.5)"></div><div class="fcb" style="left:1074.5px;top:696px;width:23.5px;height:17.5px;line-height:17.5px;"></div><div class="val" style="left:1071px;top:768.5px;width:65px;height:16.5px;line-height:16.5px;background:#3b8fe4;font-size:12.5px"><span class="sx" style="transform:scaleX(0.88)">-12.0</span></div><div class="bt" style="left:1071px;top:789.5px;width:28px;height:15px;line-height:11.5px;">S</div><div class="bt" style="left:1108.5px;top:789.5px;width:28px;height:15px;line-height:11.5px;">M</div><div class="bt mix" style="left:1071px;top:808.5px;width:66.5px;height:14.5px;line-height:11px;"><span class="sx" style="transform:scaleX(0.92)">Mix</span></div><div class="bt" style="left:1071px;top:827px;width:28px;height:15px;line-height:11.5px;">1</div><div class="bt dis" style="left:1108.5px;top:827px;width:28px;height:15px;line-height:11.5px;">2</div><div class="bt" style="left:1071px;top:846px;width:28px;height:15px;line-height:11.5px;">3</div><div class="bt" style="left:1108.5px;top:846px;width:28px;height:15px;line-height:11.5px;">4</div><div class="bt ba" style="left:1071px;top:865px;width:28px;height:15px;line-height:11.5px;">A</div><div class="bt bb" style="left:1108.5px;top:865px;width:28px;height:15px;line-height:11.5px;"><span class="sx" style="transform:scaleX(0.85)">A>B</span></div><div class="scr" style="left:1071px;top:883.5px;width:64px;height:18px;line-height:15.5px;"><span class="sx" style="transform:scaleX(0.9)">Scratch</span></div><div class="w4s" style="left:1141.5px;top:599px;width:74.5px;height:311px;line-height:311px;"></div><div class="cn" style="left:1146px;top:599px;height:18px;line-height:18px;transform:scaleX(.72)">CH 11</div><div class="st" style="left:1180.5px;top:601px;height:14px;line-height:14px;">Stereo</div><div class="sb4" style="left:1200px;top:618.5px;width:12.5px;height:12.5px;line-height:12.5px;"></div><div class="kn " style="left:1155px;top:630.5px;width:12px;height:12px;line-height:12px;"></div><div class="mc" style="left:1180px;top:640px;"></div><div class="mc" style="left:1189px;top:640px;"></div><div class="ov" style="left:1199px;top:635px;height:10px;line-height:10px;">over</div><div class="nm nw" style="left:1198px;top:645px;">0</div><div class="nm nw" style="left:1198px;top:655.5px;">4</div><div class="nm nw" style="left:1198px;top:663.5px;">6</div><div class="nm nw" style="left:1198px;top:681px;">10</div><div class="nm nw" style="left:1198px;top:698.5px;">20</div><div class="nm nw" style="left:1198px;top:716.5px;">30</div><div class="nm nw" style="left:1198px;top:728px;">40</div><div class="nm nw" style="left:1198px;top:740.5px;">50</div><div class="nm nw" style="left:1198px;top:752.5px;">60</div><div class="nm nw inf" style="left:1198px;top:759.5px;">co</div><div class="ctr" style="left:1145px;top:648px;width:30.5px;height:14px;line-height:14px;background:#869faa"><span class="sx" style="transform:scaleX(0.9)">Center</span></div><div class="" style="left:1146.5px;top:665px;width:28px;height:98px;line-height:98px;background:linear-gradient(to right,#4c606a 0,#4c606a 13%,#6a848f 15%,#6a848f 41%,#506670 43%,#506670 47%,#a8c0ca 48%,#a8c0ca 55%,#6a848f 57%,#6a848f 85%,#4c606a 87%,#4c606a 100%);border:1px solid #0c0c0c;border-top:3.5px solid #506670;border-bottom:3.5px solid #4c606a;box-shadow:0 0 0 .5px rgba(0,0,0,.5)"></div><div class="fcb" style="left:1149.5px;top:696px;width:23.5px;height:17.5px;line-height:17.5px;"></div><div class="val" style="left:1146px;top:768.5px;width:65px;height:16.5px;line-height:16.5px;background:#3b8fe4;font-size:12.5px"><span class="sx" style="transform:scaleX(0.88)">-12.0</span></div><div class="bt" style="left:1146px;top:789.5px;width:28px;height:15px;line-height:11.5px;">S</div><div class="bt" style="left:1183.5px;top:789.5px;width:28px;height:15px;line-height:11.5px;">M</div><div class="bt mix" style="left:1146px;top:808.5px;width:66.5px;height:14.5px;line-height:11px;"><span class="sx" style="transform:scaleX(0.92)">Mix</span></div><div class="bt" style="left:1146px;top:827px;width:28px;height:15px;line-height:11.5px;">1</div><div class="bt" style="left:1183.5px;top:827px;width:28px;height:15px;line-height:11.5px;">2</div><div class="bt dis" style="left:1146px;top:846px;width:28px;height:15px;line-height:11.5px;">3</div><div class="bt" style="left:1183.5px;top:846px;width:28px;height:15px;line-height:11.5px;">4</div><div class="bt ba" style="left:1146px;top:865px;width:28px;height:15px;line-height:11.5px;">A</div><div class="bt bb" style="left:1183.5px;top:865px;width:28px;height:15px;line-height:11.5px;"><span class="sx" style="transform:scaleX(0.85)">A>B</span></div><div class="scr" style="left:1146px;top:883.5px;width:64px;height:18px;line-height:15.5px;"><span class="sx" style="transform:scaleX(0.9)">Scratch</span></div><div class="w4s" style="left:1216.5px;top:599px;width:74.5px;height:311px;line-height:311px;"></div><div class="cn" style="left:1221px;top:599px;height:18px;line-height:18px;transform:scaleX(.72)">CH 12</div><div class="st" style="left:1255.5px;top:601px;height:14px;line-height:14px;">Stereo</div><div class="sb4" style="left:1275px;top:618px;width:12.5px;height:12.5px;line-height:12.5px;"></div><div class="kn " style="left:1230px;top:630px;width:12px;height:12px;line-height:12px;"></div><div class="mc" style="left:1254px;top:639px;"></div><div class="mc" style="left:1263px;top:639px;"></div><div class="ov" style="left:1273px;top:634px;height:10px;line-height:10px;">over</div><div class="nm nw" style="left:1272px;top:644px;">0</div><div class="nm nw" style="left:1272px;top:654.5px;">4</div><div class="nm nw" style="left:1272px;top:662.5px;">6</div><div class="nm nw" style="left:1272px;top:680px;">10</div><div class="nm nw" style="left:1272px;top:697.5px;">20</div><div class="nm nw" style="left:1272px;top:715.5px;">30</div><div class="nm nw" style="left:1272px;top:727px;">40</div><div class="nm nw" style="left:1272px;top:739.5px;">50</div><div class="nm nw" style="left:1272px;top:751.5px;">60</div><div class="nm nw inf" style="left:1272px;top:758.5px;">co</div><div class="ctr" style="left:1220px;top:647.5px;width:30.5px;height:14px;line-height:14px;background:#869faa"><span class="sx" style="transform:scaleX(0.9)">Center</span></div><div class="" style="left:1221.5px;top:664.5px;width:28px;height:98px;line-height:98px;background:linear-gradient(to right,#4c606a 0,#4c606a 13%,#6a848f 15%,#6a848f 41%,#506670 43%,#506670 47%,#a8c0ca 48%,#a8c0ca 55%,#6a848f 57%,#6a848f 85%,#4c606a 87%,#4c606a 100%);border:1px solid #0c0c0c;border-top:3.5px solid #506670;border-bottom:3.5px solid #4c606a;box-shadow:0 0 0 .5px rgba(0,0,0,.5)"></div><div class="fcb" style="left:1224.5px;top:695.5px;width:23.5px;height:17.5px;line-height:17.5px;"></div><div class="val" style="left:1221px;top:768px;width:65px;height:16.5px;line-height:16.5px;background:#3b8fe4;font-size:12.5px"><span class="sx" style="transform:scaleX(0.88)">-12.0</span></div><div class="bt" style="left:1221px;top:789px;width:28px;height:15px;line-height:11.5px;">S</div><div class="bt" style="left:1258.5px;top:789px;width:28px;height:15px;line-height:11.5px;">M</div><div class="bt mix" style="left:1221px;top:808px;width:66.5px;height:14.5px;line-height:11px;"><span class="sx" style="transform:scaleX(0.92)">Mix</span></div><div class="bt" style="left:1221px;top:826.5px;width:28px;height:15px;line-height:11.5px;">1</div><div class="bt" style="left:1258.5px;top:826.5px;width:28px;height:15px;line-height:11.5px;">2</div><div class="bt" style="left:1221px;top:845.5px;width:28px;height:15px;line-height:11.5px;">3</div><div class="bt dis" style="left:1258.5px;top:845.5px;width:28px;height:15px;line-height:11.5px;">4</div><div class="bt ba" style="left:1221px;top:864.5px;width:28px;height:15px;line-height:11.5px;">A</div><div class="bt bb" style="left:1258.5px;top:864.5px;width:28px;height:15px;line-height:11.5px;"><span class="sx" style="transform:scaleX(0.85)">A>B</span></div><div class="scr" style="left:1221px;top:883px;width:64px;height:18px;line-height:15.5px;"><span class="sx" style="transform:scaleX(0.9)">Scratch</span></div><div class="w4m" style="left:1292.5px;top:599px;width:72.5px;height:311px;line-height:311px;"></div><div class="lbl" style="left:1292.5px;top:601px;width:72.5px;height:20px;line-height:20px;letter-spacing:.3px;font-size:16px">Master</div><div class="kn " style="left:1304.5px;top:632.5px;width:12px;height:12px;line-height:12px;"></div><div class="mc" style="left:1329px;top:640px;"></div><div class="mc" style="left:1340px;top:640px;"></div><div class="ov" style="left:1350px;top:635px;height:10px;line-height:10px;">over</div><div class="nm nw" style="left:1348.5px;top:645px;">0</div><div class="nm nw" style="left:1348.5px;top:655.5px;">4</div><div class="nm nw" style="left:1348.5px;top:663.5px;">6</div><div class="nm nw" style="left:1348.5px;top:681px;">10</div><div class="nm nw" style="left:1348.5px;top:698.5px;">20</div><div class="nm nw" style="left:1348.5px;top:716.5px;">30</div><div class="nm nw" style="left:1348.5px;top:728px;">40</div><div class="nm nw" style="left:1348.5px;top:740.5px;">50</div><div class="nm nw" style="left:1348.5px;top:752.5px;">60</div><div class="nm nw inf" style="left:1348.5px;top:759.5px;">co</div><div class="ctr" style="left:1295px;top:649px;width:30px;height:13.5px;line-height:13.5px;background:#3a414b"><span class="sx" style="transform:scaleX(0.9)">Center</span></div><div class="" style="left:1295px;top:665px;width:28.5px;height:99px;line-height:99px;background:linear-gradient(to right,#0c0e12 0,#0c0e12 13%,#23272f 15%,#23272f 41%,#0a0b0e 43%,#0a0b0e 47%,#555b63 48%,#555b63 55%,#23272f 57%,#23272f 85%,#0c0e12 87%,#0c0e12 100%);border:1px solid #0c0c0c;border-top:3.5px solid #0a0b0e;border-bottom:3.5px solid #0c0e12;box-shadow:0 0 0 .5px rgba(0,0,0,.5)"></div><div class="fcb" style="left:1298px;top:697px;width:23px;height:17px;line-height:17px;"></div><div class="val" style="left:1296.5px;top:769px;width:66px;height:17px;line-height:17px;background:#0b3c96;font-size:12.5px"><span class="sx" style="transform:scaleX(0.88)">-12.0</span></div><div class="big" style="left:1294.5px;top:788.5px;width:68px;height:53px;line-height:50px;line-height:54px;background:#3d8d4a">On</div><div class="mid" style="left:1296px;top:845.5px;width:66.5px;height:34.5px;line-height:31.5px;background:#79343d">Stereo</div><div class="lbl" style="left:1292.5px;top:882.5px;width:72.5px;height:20px;line-height:20px;letter-spacing:.3px;font-size:16px">Master</div><div class="w4m" style="left:1366.5px;top:599px;width:72.5px;height:311px;line-height:311px;"></div><div class="lbl" style="left:1366.5px;top:601px;width:72.5px;height:20px;line-height:20px;letter-spacing:.3px;font-size:16px">Phones</div><div class="kn " style="left:1378.5px;top:632.5px;width:12px;height:12px;line-height:12px;"></div><div class="mc" style="left:1403px;top:640px;"></div><div class="mc" style="left:1414px;top:640px;"></div><div class="ov" style="left:1424px;top:635px;height:10px;line-height:10px;">over</div><div class="nm nw" style="left:1422.5px;top:645px;">0</div><div class="nm nw" style="left:1422.5px;top:655.5px;">4</div><div class="nm nw" style="left:1422.5px;top:663.5px;">6</div><div class="nm nw" style="left:1422.5px;top:681px;">10</div><div class="nm nw" style="left:1422.5px;top:698.5px;">20</div><div class="nm nw" style="left:1422.5px;top:716.5px;">30</div><div class="nm nw" style="left:1422.5px;top:728px;">40</div><div class="nm nw" style="left:1422.5px;top:740.5px;">50</div><div class="nm nw" style="left:1422.5px;top:752.5px;">60</div><div class="nm nw inf" style="left:1422.5px;top:759.5px;">co</div><div class="ctr" style="left:1369px;top:649px;width:30px;height:13.5px;line-height:13.5px;background:#3a414b"><span class="sx" style="transform:scaleX(0.9)">Center</span></div><div class="" style="left:1369px;top:665px;width:28.5px;height:99px;line-height:99px;background:linear-gradient(to right,#0c0e12 0,#0c0e12 13%,#23272f 15%,#23272f 41%,#0a0b0e 43%,#0a0b0e 47%,#555b63 48%,#555b63 55%,#23272f 57%,#23272f 85%,#0c0e12 87%,#0c0e12 100%);border:1px solid #0c0c0c;border-top:3.5px solid #0a0b0e;border-bottom:3.5px solid #0c0e12;box-shadow:0 0 0 .5px rgba(0,0,0,.5)"></div><div class="fcb" style="left:1372px;top:697px;width:23px;height:17px;line-height:17px;"></div><div class="val" style="left:1371px;top:769px;width:66px;height:17px;line-height:17px;background:#0b3c96;font-size:12.5px"><span class="sx" style="transform:scaleX(0.88)">-12.0</span></div><div class="big" style="left:1369px;top:788.5px;width:68px;height:53px;line-height:50px;line-height:54px;background:#343434">Off</div><div class="mid" style="left:1370px;top:845.5px;width:66.5px;height:34.5px;line-height:31.5px;background:#596a70">Mon Rec</div><div class="lbl" style="left:1366.5px;top:882.5px;width:72.5px;height:20px;line-height:20px;letter-spacing:.3px;font-size:16px">Phones</div><div class="w4m" style="left:1441px;top:599px;width:72.5px;height:311px;line-height:311px;"></div><div class="lbl" style="left:1441px;top:601px;width:72.5px;height:20px;line-height:20px;letter-spacing:.3px;font-size:16px">Record</div><div class="kn " style="left:1453px;top:632.5px;width:12px;height:12px;line-height:12px;"></div><div class="mc" style="left:1478px;top:640px;"></div><div class="mc" style="left:1489px;top:640px;"></div><div class="ov" style="left:1499px;top:635px;height:10px;line-height:10px;">over</div><div class="nm nw" style="left:1497.5px;top:645px;">0</div><div class="nm nw" style="left:1497.5px;top:655.5px;">4</div><div class="nm nw" style="left:1497.5px;top:663.5px;">6</div><div class="nm nw" style="left:1497.5px;top:681px;">10</div><div class="nm nw" style="left:1497.5px;top:698.5px;">20</div><div class="nm nw" style="left:1497.5px;top:728px;">40</div><div class="nm nw" style="left:1497.5px;top:740.5px;">50</div><div class="nm nw" style="left:1497.5px;top:752.5px;">60</div><div class="nm nw inf" style="left:1497.5px;top:759.5px;">co</div><div class="ctr" style="left:1443.5px;top:649px;width:30px;height:13.5px;line-height:13.5px;background:#3a414b"><span class="sx" style="transform:scaleX(0.9)">Center</span></div><div class="" style="left:1443.5px;top:665px;width:28.5px;height:99px;line-height:99px;background:linear-gradient(to right,#0c0e12 0,#0c0e12 13%,#23272f 15%,#23272f 41%,#0a0b0e 43%,#0a0b0e 47%,#555b63 48%,#555b63 55%,#23272f 57%,#23272f 85%,#0c0e12 87%,#0c0e12 100%);border:1px solid #0c0c0c;border-top:3.5px solid #0a0b0e;border-bottom:3.5px solid #0c0e12;box-shadow:0 0 0 .5px rgba(0,0,0,.5)"></div><div class="fcb" style="left:1446.5px;top:697px;width:23px;height:17px;line-height:17px;"></div><div class="val" style="left:1445px;top:769px;width:66px;height:17px;line-height:17px;background:#0b3c96;font-size:12.5px"><span class="sx" style="transform:scaleX(0.88)">-12.0</span></div><div class="big" style="left:1443.5px;top:788.5px;width:68px;height:53px;line-height:50px;line-height:54px;background:#343434">Off</div><div class="sk4" style="left:1450px;top:845px;height:13px;line-height:13px;letter-spacing:.5px">Rec Select</div><div class="dd bd" style="left:1445.5px;top:862.5px;width:52.5px;height:14.5px;line-height:14.5px;color:#2c6288;font-size:11.5px"><span class="sxl" style="transform:scaleX(1)">Mstr Out</span></div><div class="arr" style="left:1501px;top:865px;width:11px;height:11px;line-height:11px;"></div><div class="lbl" style="left:1441px;top:882.5px;width:72.5px;height:20px;line-height:20px;letter-spacing:.3px;font-size:16px">Record</div></body></html>
